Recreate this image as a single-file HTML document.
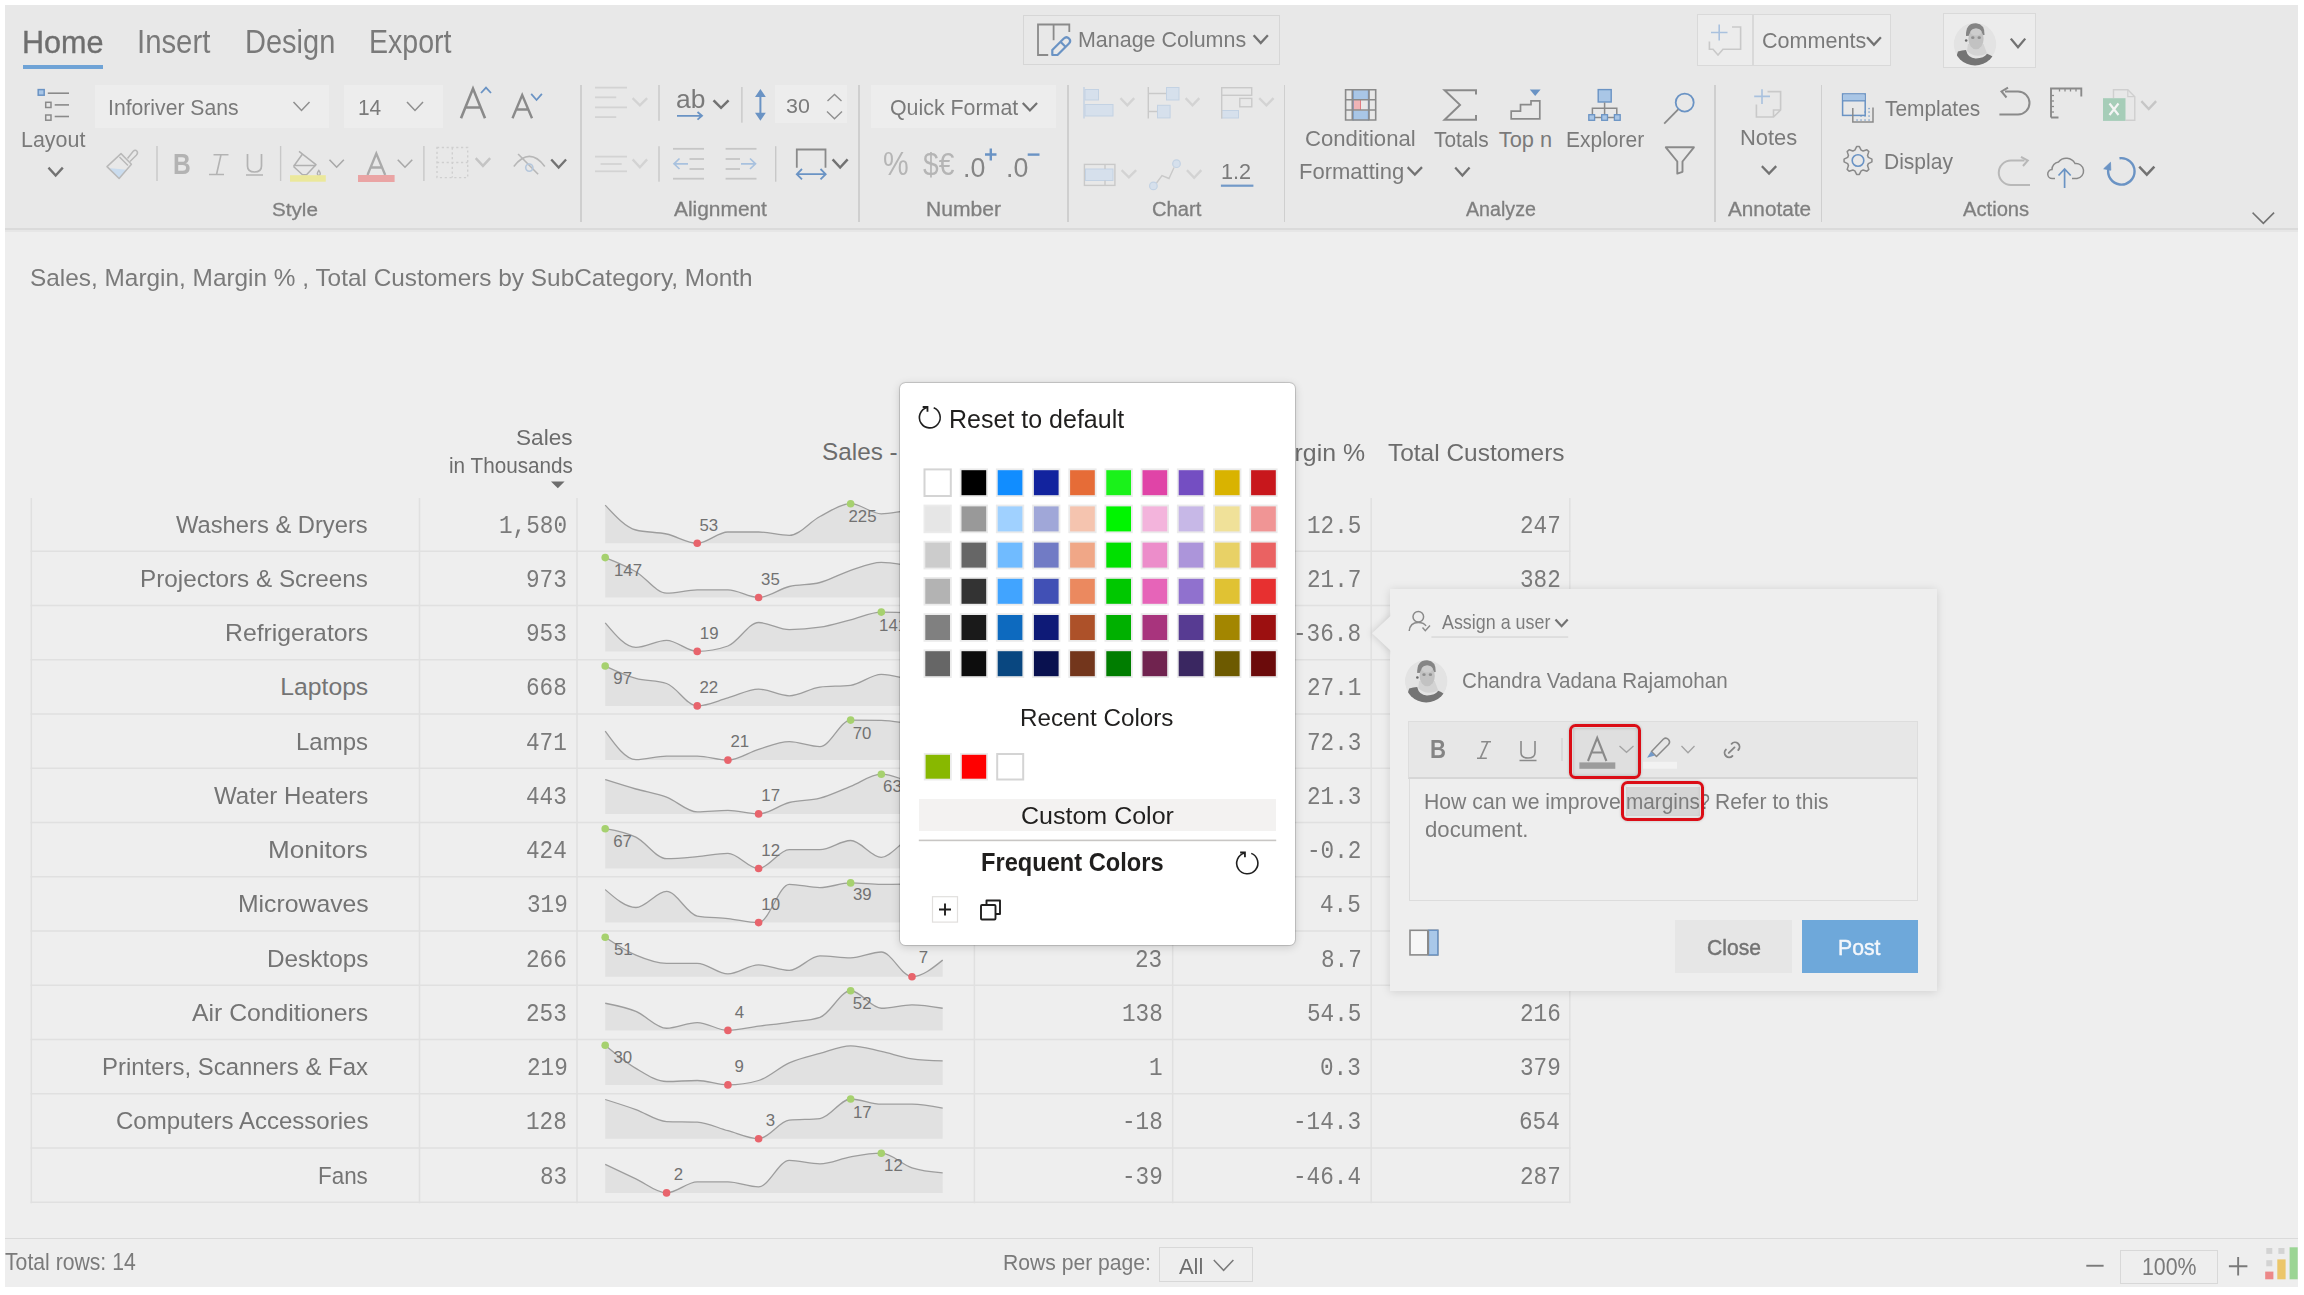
<!DOCTYPE html>
<html><head><meta charset="utf-8">
<style>
html,body{margin:0;padding:0;width:2304px;height:1295px;overflow:hidden;background:#fff;}
body{position:relative;font-family:"Liberation Sans", sans-serif;}
.t{position:absolute;white-space:nowrap;transform-origin:0 0;}
.r{position:absolute;}
svg{position:absolute;overflow:visible;}
</style></head><body>
<div class="r" style="left:5.00px;top:5.00px;width:2293.00px;height:1282.00px;background:#eeeeee;"></div>
<div class="r" style="left:5.00px;top:5.00px;width:2293.00px;height:223.00px;background:#e8e8e8;"></div>
<div class="r" style="left:5.00px;top:228.00px;width:2293.00px;height:2.00px;background:#dadada;"></div>
<div class="r" style="left:5.00px;top:230.00px;width:2293.00px;height:2.00px;background:#e6e6e6;"></div>
<div class="t" style="left:22.26px;top:26.31px;font-size:32.00px;line-height:32.00px;color:#6e6e6e;transform:scaleX(0.9547);-webkit-text-stroke:0.35px #6e6e6e;">Home</div>
<div class="t" style="left:136.86px;top:25.47px;font-size:32.99px;line-height:32.99px;color:#7a7a7a;transform:scaleX(0.8885);">Insert</div>
<div class="t" style="left:245.18px;top:25.47px;font-size:32.99px;line-height:32.99px;color:#7a7a7a;transform:scaleX(0.8791);">Design</div>
<div class="t" style="left:369.21px;top:25.47px;font-size:32.99px;line-height:32.99px;color:#7a7a7a;transform:scaleX(0.8660);">Export</div>
<div class="r" style="left:23.20px;top:64.60px;width:79.70px;height:4.70px;background:#6fa3d6;"></div>
<div class="r" style="left:1023.00px;top:15.00px;width:256.80px;height:49.50px;border:1.5px solid #d6d6d6;box-sizing:border-box;"></div>
<div class="t" style="left:1078.28px;top:28.88px;font-size:22.00px;line-height:22.00px;color:#7a7a7a;transform:scaleX(0.9750);">Manage Columns</div>
<div class="r" style="left:1697.00px;top:14.00px;width:194.25px;height:52.40px;background:#ececec;border:1.5px solid #d9d9d9;box-sizing:border-box;"></div>
<div class="r" style="left:1752.00px;top:15.00px;width:1.50px;height:50.00px;background:#d9d9d9;"></div>
<div class="t" style="left:1762.32px;top:29.78px;font-size:22.00px;line-height:22.00px;color:#7a7a7a;transform:scaleX(0.9799);">Comments</div>
<div class="r" style="left:1943.40px;top:12.50px;width:92.20px;height:55.90px;background:#ececec;border:1.5px solid #d9d9d9;box-sizing:border-box;"></div>
<div class="r" style="left:95.00px;top:85.00px;width:234.20px;height:43.00px;background:#ededed;"></div>
<div class="t" style="left:108.09px;top:95.68px;font-size:22.82px;line-height:22.82px;color:#7a7a7a;transform:scaleX(0.9279);">Inforiver Sans</div>
<div class="r" style="left:344.00px;top:85.00px;width:98.80px;height:43.00px;background:#ededed;"></div>
<div class="t" style="left:358.43px;top:95.68px;font-size:22.82px;line-height:22.82px;color:#7a7a7a;transform:scaleX(0.9157);">14</div>
<div class="r" style="left:775.00px;top:85.00px;width:71.70px;height:38.40px;background:#ededed;"></div>
<div class="t" style="left:785.94px;top:96.01px;font-size:20.78px;line-height:20.78px;color:#7a7a7a;transform:scaleX(1.0320);">30</div>
<div class="r" style="left:870.80px;top:85.00px;width:185.60px;height:43.00px;background:#ededed;"></div>
<div class="t" style="left:890.44px;top:95.68px;font-size:22.82px;line-height:22.82px;color:#7a7a7a;transform:scaleX(0.9368);">Quick Format</div>
<div class="t" style="left:21.08px;top:128.68px;font-size:22.24px;line-height:22.24px;color:#7a7a7a;transform:scaleX(0.9641);">Layout</div>
<div class="t" style="left:1305.29px;top:128.28px;font-size:22.24px;line-height:22.24px;color:#7a7a7a;transform:scaleX(0.9951);">Conditional</div>
<div class="t" style="left:1298.84px;top:160.78px;font-size:22.24px;line-height:22.24px;color:#7a7a7a;transform:scaleX(0.9896);">Formatting</div>
<div class="t" style="left:1433.68px;top:128.64px;font-size:21.80px;line-height:21.80px;color:#7a7a7a;transform:scaleX(0.9586);">Totals</div>
<div class="t" style="left:1498.76px;top:128.64px;font-size:21.80px;line-height:21.80px;color:#7a7a7a;">Top n</div>
<div class="t" style="left:1565.92px;top:128.64px;font-size:21.80px;line-height:21.80px;color:#7a7a7a;transform:scaleX(0.9629);">Explorer</div>
<div class="t" style="left:1739.95px;top:127.04px;font-size:21.80px;line-height:21.80px;color:#7a7a7a;transform:scaleX(1.0056);">Notes</div>
<div class="t" style="left:1885.08px;top:98.02px;font-size:21.95px;line-height:21.95px;color:#7a7a7a;transform:scaleX(0.9527);">Templates</div>
<div class="t" style="left:1884.32px;top:150.54px;font-size:21.80px;line-height:21.80px;color:#7a7a7a;transform:scaleX(0.9646);">Display</div>
<div class="t" style="left:1221.38px;top:160.94px;font-size:21.80px;line-height:21.80px;color:#7a7a7a;transform:scaleX(0.9935);">1.2</div>
<div class="t" style="left:272.47px;top:200.51px;font-size:18.90px;line-height:18.90px;color:#7f7f7f;transform:scaleX(1.0932);-webkit-text-stroke:0.3px #7f7f7f;">Style</div>
<div class="t" style="left:673.80px;top:199.74px;font-size:19.33px;line-height:19.33px;color:#7f7f7f;transform:scaleX(1.0812);-webkit-text-stroke:0.3px #7f7f7f;">Alignment</div>
<div class="t" style="left:926.21px;top:199.74px;font-size:19.33px;line-height:19.33px;color:#7f7f7f;transform:scaleX(1.0899);-webkit-text-stroke:0.3px #7f7f7f;">Number</div>
<div class="t" style="left:1152.19px;top:199.74px;font-size:19.33px;line-height:19.33px;color:#7f7f7f;transform:scaleX(1.0432);-webkit-text-stroke:0.3px #7f7f7f;">Chart</div>
<div class="t" style="left:1466.00px;top:199.74px;font-size:19.33px;line-height:19.33px;color:#7f7f7f;transform:scaleX(1.0169);-webkit-text-stroke:0.3px #7f7f7f;">Analyze</div>
<div class="t" style="left:1728.00px;top:199.74px;font-size:19.33px;line-height:19.33px;color:#7f7f7f;transform:scaleX(1.0725);-webkit-text-stroke:0.3px #7f7f7f;">Annotate</div>
<div class="t" style="left:1963.00px;top:199.74px;font-size:19.33px;line-height:19.33px;color:#7f7f7f;transform:scaleX(1.0442);-webkit-text-stroke:0.3px #7f7f7f;">Actions</div>
<div class="r" style="left:580.05px;top:85.00px;width:1.50px;height:137.00px;background:#cfcfcf;"></div>
<div class="r" style="left:858.05px;top:85.00px;width:1.50px;height:137.00px;background:#cfcfcf;"></div>
<div class="r" style="left:1067.35px;top:85.00px;width:1.50px;height:137.00px;background:#cfcfcf;"></div>
<div class="r" style="left:1283.95px;top:85.00px;width:1.50px;height:137.00px;background:#cfcfcf;"></div>
<div class="r" style="left:1714.25px;top:85.00px;width:1.50px;height:137.00px;background:#cfcfcf;"></div>
<div class="r" style="left:1820.95px;top:85.00px;width:1.50px;height:137.00px;background:#cfcfcf;"></div>
<div class="t" style="left:30.40px;top:266.08px;font-size:24.71px;line-height:24.71px;color:#7a7a7a;transform:scaleX(0.9868);">Sales, Margin, Margin % , Total Customers by SubCategory, Month</div>
<svg width="2304" height="1295" style="left:0;top:0"><rect x="38.2" y="89.6" width="6" height="5.6" fill="#a9c6e6" stroke="#6a93c4" stroke-width="1.5"/>
<line x1="47.8" y1="93.2" x2="69" y2="93.2" stroke="#8a8a8a" stroke-width="1.6"/>
<rect x="45.7" y="102.3" width="5.3" height="5.2" fill="none" stroke="#8a8a8a" stroke-width="1.5"/>
<rect x="45.7" y="115" width="5.3" height="5.2" fill="none" stroke="#8a8a8a" stroke-width="1.5"/>
<line x1="54.7" y1="104.9" x2="69" y2="104.9" stroke="#8a8a8a" stroke-width="1.6"/>
<line x1="54.7" y1="116.5" x2="69" y2="116.5" stroke="#8a8a8a" stroke-width="1.6"/>
<polyline points="49.3,168.5 55.65,175.5 62,168.5" fill="none" stroke="#727272" stroke-width="2.4" stroke-linecap="square"/>
<polyline points="294,102.5 301.5,110.5 309,102.5" fill="none" stroke="#8f8f8f" stroke-width="1.5" stroke-linecap="square"/>
<polyline points="407.5,102.5 415.0,110.5 422.5,102.5" fill="none" stroke="#8f8f8f" stroke-width="1.5" stroke-linecap="square"/>
<path d="M461,118.2 L473,88.6 L485,118.2 M465.5,107.5 H480.5" fill="none" stroke="#8a8a8a" stroke-width="2.6"/>
<polyline points="481,93 486.0,87.6 491,93" fill="none" stroke="#6a93c4" stroke-width="1.8"/>
<path d="M512.5,118.2 L522.2,95 L532,118.2 M516.3,109.5 H528.3" fill="none" stroke="#8a8a8a" stroke-width="2.4"/>
<polyline points="531.8,94.6 536.55,100 541.3,94.6" fill="none" stroke="#6a93c4" stroke-width="1.8" stroke-linecap="square"/>
<path d="M108.4,168 L126.8,169.8 L119.1,178 Z" fill="#cadcee"/>
<path d="M107,166.6 L121,153.6 L131.4,164.2 L119.1,178.5 Z M119.5,157 L128,165.5" fill="none" stroke="#b9b9b9" stroke-width="1.5" stroke-linejoin="round"/>
<path d="M127.5,158.5 L133.2,151.3 Q135.3,149.3 137,151.2 Q138.3,153.2 136.3,155.3 L130,161.5" fill="none" stroke="#b9b9b9" stroke-width="1.5"/>
<rect x="156.3" y="146" width="1.4" height="35" fill="#c8c8c8"/>
<rect x="279.90000000000003" y="146" width="1.4" height="35" fill="#c8c8c8"/>
<rect x="423.2" y="146" width="1.4" height="35" fill="#c8c8c8"/>
<rect x="658.3" y="85" width="1.4" height="35.8" fill="#c8c8c8"/>
<rect x="658.3" y="146.2" width="1.4" height="35.5" fill="#c8c8c8"/>
<rect x="741.1999999999999" y="87" width="1.4" height="35.7" fill="#c8c8c8"/>
<rect x="775.0" y="146.2" width="1.4" height="35.5" fill="#c8c8c8"/>
<path d="M213.5,154.8 H228.5 M209,174.5 H224 M221,154.8 L216.5,174.5" fill="none" stroke="#b3b3b3" stroke-width="1.6"/>
<path d="M247.5,154 V166 Q247.5,172 254.5,172 Q261.5,172 261.5,166 V154 M246,175 H263" fill="none" stroke="#b3b3b3" stroke-width="1.7"/>
<path d="M293.5,166.5 L302.3,154.2 M299,151.4 L316,164.7 L306.5,174.7 H302.5 L293.5,166.5 M293.5,165.6 H316" fill="none" stroke="#b0b0b0" stroke-width="1.5" stroke-linejoin="round"/>
<path d="M318.8,170.5 Q321.8,174.5 318.8,175.5 Q315.8,174.5 318.8,170.5 Z" fill="none" stroke="#b0b0b0" stroke-width="1.4"/>
<rect x="290" y="175.2" width="35.8" height="6.5" fill="#ebe89b"/>
<polyline points="330,160.3 336.65,167.2 343.3,160.3" fill="none" stroke="#a8a8a8" stroke-width="1.6" stroke-linecap="square"/>
<path d="M367.5,175 L376.3,153.5 L385.2,175 M370.8,167.5 H381.8" fill="none" stroke="#aaaaaa" stroke-width="2.3"/>
<rect x="358" y="175" width="36.6" height="7" fill="#eaa4a4"/>
<polyline points="398.3,160.3 405.0,167.2 411.7,160.3" fill="none" stroke="#a8a8a8" stroke-width="1.6" stroke-linecap="square"/>
<path d="M437,147.5 H467.7 V177.6 H437 Z M452.3,147.5 V177.6 M437,162.5 H467.7" fill="none" stroke="#cfcfcf" stroke-width="1.4" stroke-dasharray="2.2,2.6"/>
<polyline points="476.6,159 482.95000000000005,165.8 489.3,159" fill="none" stroke="#c4c4c4" stroke-width="2.5" stroke-linecap="square"/>
<path d="M513.8,166.4 Q529.6,146.4 544.8,166.4" fill="none" stroke="#b7b7b7" stroke-width="1.6"/>
<path d="M518.1,154 L538.1,174.3" fill="none" stroke="#b7b7b7" stroke-width="1.6"/>
<circle cx="529.3" cy="167.6" r="3.6" fill="none" stroke="#b5c7dc" stroke-width="1.6"/>
<polyline points="552,160.3 558.65,167.5 565.3,160.3" fill="none" stroke="#727272" stroke-width="2.3" stroke-linecap="square"/>
<line x1="595" y1="87.6" x2="627" y2="87.6" stroke="#d3d3d3" stroke-width="1.8"/>
<line x1="595" y1="97.3" x2="616.2" y2="97.3" stroke="#d3d3d3" stroke-width="1.8"/>
<line x1="595" y1="107.4" x2="627" y2="107.4" stroke="#d3d3d3" stroke-width="1.8"/>
<line x1="595" y1="117.1" x2="616.2" y2="117.1" stroke="#d3d3d3" stroke-width="1.8"/>
<polyline points="633.5,99 639.9,105.3 646.3,99" fill="none" stroke="#d3d3d3" stroke-width="2.4" stroke-linecap="square"/>
<path d="M677,115.8 H702 M697.5,112 L702,115.8 L697.5,119.6" fill="none" stroke="#6a93c4" stroke-width="1.8"/>
<polyline points="714.4,101.2 721.05,107.8 727.7,101.2" fill="none" stroke="#727272" stroke-width="2.5" stroke-linecap="square"/>
<path d="M760.4,92 V117.5" stroke="#6a93c4" stroke-width="2"/>
<path d="M755,97 L760.4,88.9 L765.8,97 Z M755,112.7 L760.4,120.8 L765.8,112.7 Z" fill="#6a93c4"/>
<polyline points="827.5,101 834.5,94.5 841.5,101" fill="none" stroke="#8f8f8f" stroke-width="1.4"/>
<polyline points="827.5,112 834.5,118.8 841.5,112" fill="none" stroke="#8f8f8f" stroke-width="1.4" stroke-linecap="square"/>
<line x1="595" y1="156.6" x2="627" y2="156.6" stroke="#d3d3d3" stroke-width="1.8"/>
<line x1="600.6" y1="164" x2="621.7" y2="164" stroke="#d3d3d3" stroke-width="1.8"/>
<line x1="595" y1="171.3" x2="627" y2="171.3" stroke="#d3d3d3" stroke-width="1.8"/>
<polyline points="633.5,160.3 639.9,167.2 646.3,160.3" fill="none" stroke="#d3d3d3" stroke-width="2.4" stroke-linecap="square"/>
<line x1="673" y1="148.8" x2="704" y2="148.8" stroke="#c6c6c6" stroke-width="1.8"/>
<line x1="673" y1="178.7" x2="704" y2="178.7" stroke="#c6c6c6" stroke-width="1.8"/>
<line x1="689.5" y1="159" x2="704" y2="159" stroke="#c6c6c6" stroke-width="1.8"/>
<line x1="689.5" y1="169" x2="704" y2="169" stroke="#c6c6c6" stroke-width="1.8"/>
<path d="M688,163.8 H674 M679.5,158.5 L674,163.8 L679.5,169" fill="none" stroke="#a8c1de" stroke-width="1.7"/>
<line x1="725.6" y1="148.8" x2="756.5" y2="148.8" stroke="#c6c6c6" stroke-width="1.8"/>
<line x1="725.6" y1="178.7" x2="756.5" y2="178.7" stroke="#c6c6c6" stroke-width="1.8"/>
<line x1="725.6" y1="159" x2="740" y2="159" stroke="#c6c6c6" stroke-width="1.8"/>
<line x1="725.6" y1="169" x2="740" y2="169" stroke="#c6c6c6" stroke-width="1.8"/>
<path d="M741,163.8 H755.5 M750,158.5 L755.5,163.8 L750,169" fill="none" stroke="#a8c1de" stroke-width="1.7"/>
<path d="M796.8,167.7 V149.5 H825.5 V167.7" fill="none" stroke="#8a8a8a" stroke-width="1.8"/>
<path d="M797,174.2 H825.5 M802,169 L796.8,174.2 L802,179.4 M820.5,169 L825.7,174.2 L820.5,179.4" fill="none" stroke="#6a93c4" stroke-width="1.8"/>
<polyline points="833.5,160.3 840.15,167.5 846.8,160.3" fill="none" stroke="#727272" stroke-width="2.5" stroke-linecap="square"/>
<polyline points="1023.5,103.7 1029.9,110.5 1036.3,103.7" fill="none" stroke="#727272" stroke-width="2.2" stroke-linecap="square"/>
<path d="M985,154.5 H996.5 M990.8,148.5 V160.5" stroke="#6a93c4" stroke-width="2.4"/>
<path d="M1027.7,154.6 H1039.5" stroke="#6a93c4" stroke-width="2.4"/>
<path d="M1084,87 V118.5" stroke="#c3d2e3" stroke-width="1.4"/>
<rect x="1085" y="89.5" width="13.5" height="10.5" fill="#d6e0ec" stroke="#c3d2e3" stroke-width="1"/>
<rect x="1085" y="104.5" width="28" height="11.5" fill="#d6e0ec" stroke="#c3d2e3" stroke-width="1"/>
<polyline points="1121.3,99 1127.35,105.3 1133.4,99" fill="none" stroke="#d3d3d3" stroke-width="2.4" stroke-linecap="square"/>
<path d="M1148.3,87 V118.4 M1148.3,93.5 H1166 M1148.3,111.5 H1157" stroke="#c9c9c9" stroke-width="1.4" fill="none"/>
<rect x="1166.5" y="87.5" width="12.5" height="12.5" fill="#d6e0ec" stroke="#c3d2e3" stroke-width="1"/>
<rect x="1157.5" y="105.3" width="12.6" height="12.6" fill="#d6e0ec" stroke="#c3d2e3" stroke-width="1"/>
<polyline points="1186.5,99 1192.5,105.3 1198.5,99" fill="none" stroke="#d3d3d3" stroke-width="2.4" stroke-linecap="square"/>
<rect x="1221.7" y="87.7" width="30" height="7.6" fill="none" stroke="#c9c9c9" stroke-width="1.4"/>
<rect x="1239.8" y="98.4" width="12" height="8.4" fill="none" stroke="#c9c9c9" stroke-width="1.4"/>
<rect x="1221.5" y="110.5" width="17" height="7.5" fill="#d6e0ec" stroke="#c3d2e3" stroke-width="1"/>
<path d="M1221.7,95.3 V118.4" stroke="#c9c9c9" stroke-width="1.4"/>
<polyline points="1260.1,99 1266.4,105.3 1272.7,99" fill="none" stroke="#d3d3d3" stroke-width="2.4" stroke-linecap="square"/>
<rect x="1084.4" y="164.4" width="30.5" height="21" fill="none" stroke="#c9c9c9" stroke-width="1.4"/>
<rect x="1085.5" y="169" width="27.5" height="11.5" fill="#d6e0ec" stroke="#c3d2e3" stroke-width="1"/>
<path d="M1105,164.4 V169 M1105,180.5 V185.4" stroke="#c9c9c9" stroke-width="1.4"/>
<polyline points="1122.5,171 1128.9,177.4 1135.3,171" fill="none" stroke="#d3d3d3" stroke-width="2.4" stroke-linecap="square"/>
<path d="M1156.5,183 L1162,175.5 L1169,178.5 L1174,167.5" fill="none" stroke="#c9c9c9" stroke-width="1.4"/>
<circle cx="1153.4" cy="185.9" r="3.8" fill="#d6e0ec" stroke="#c3d2e3" stroke-width="1.2"/>
<circle cx="1176.5" cy="163.7" r="3.8" fill="#d6e0ec" stroke="#c3d2e3" stroke-width="1.2"/>
<polyline points="1187.8,171 1194.15,177.8 1200.5,171" fill="none" stroke="#d3d3d3" stroke-width="2.4" stroke-linecap="square"/>
<rect x="1220.9" y="184.6" width="32.5" height="2.2" fill="#7299c8"/>
<rect x="1353" y="89.5" width="15.5" height="10" fill="#a9c6e6"/>
<rect x="1353" y="110.5" width="15.5" height="10" fill="#a9c6e6"/>
<rect x="1353" y="100" width="7.5" height="10" fill="#f0b4b6"/>
<path d="M1353,100 V110 M1360.5,100 V110" stroke="#e27b80" stroke-width="1"/>
<path d="M1353,89.5 V120.5 M1368.5,89.5 V120.5" stroke="#6a93c4" stroke-width="1.3"/>
<path d="M1345.6,89.7 H1375.7 V120 H1345.6 Z M1345.6,99.8 H1375.7 M1345.6,110 H1375.7 M1352.3,89.7 V120 M1369,89.7 V120" fill="none" stroke="#8a8a8a" stroke-width="1.6"/>
<polyline points="1408.5,168 1414.85,174.5 1421.2,168" fill="none" stroke="#727272" stroke-width="2.3" stroke-linecap="square"/>
<path d="M1476,94.5 V90.2 H1444.6 L1460,104.9 L1444.6,119.7 H1476 V115" fill="none" stroke="#8a8a8a" stroke-width="2"/>
<polyline points="1456,168.4 1462.4,175.6 1468.8,168.4" fill="none" stroke="#727272" stroke-width="2.3" stroke-linecap="square"/>
<path d="M1511.2,118.8 V111.2 H1520.5 V104.6 H1531 V100.9 H1539.8 V118.8 Z" fill="none" stroke="#8a8a8a" stroke-width="1.7"/>
<path d="M1529.8,89.5 H1540.6 L1535.2,96 Z" fill="#6a93c4"/>
<rect x="1598.2" y="89.6" width="13" height="12.4" fill="#a9c6e6" stroke="#6a93c4" stroke-width="1.4"/>
<path d="M1604.6,102.6 V114.5 M1592.4,114.5 V108.2 H1616.8 V114.5 M1595,117.4 H1614" fill="none" stroke="#8a8a8a" stroke-width="1.5"/>
<rect x="1588.8" y="114.7" width="5.8" height="5.6" fill="#a9c6e6" stroke="#6a93c4" stroke-width="1.3"/>
<rect x="1601.6999999999998" y="114.7" width="5.8" height="5.6" fill="#a9c6e6" stroke="#6a93c4" stroke-width="1.3"/>
<rect x="1614.3999999999999" y="114.7" width="5.8" height="5.6" fill="#a9c6e6" stroke="#6a93c4" stroke-width="1.3"/>
<circle cx="1684.7" cy="102.6" r="9" fill="none" stroke="#6a93c4" stroke-width="1.8"/>
<line x1="1678.2" y1="109.3" x2="1664.2" y2="123.6" stroke="#8a8a8a" stroke-width="1.8"/>
<path d="M1665.8,147.3 H1693.9 L1682.5,161.5 V171.8 L1677.3,173.6 V161.5 Z" fill="none" stroke="#8a8a8a" stroke-width="1.9" stroke-linejoin="round"/>
<path d="M1754.2,96.4 H1770 M1762,89.3 V104" stroke="#a9c1de" stroke-width="1.6"/>
<path d="M1767.5,91.6 H1780.6 V110 L1773.5,117 H1756.4 V104.5 M1773.5,117 V110 H1780.6" fill="none" stroke="#c9c9c9" stroke-width="1.6"/>
<polyline points="1762.7,167 1769.0500000000002,173.6 1775.4,167" fill="none" stroke="#727272" stroke-width="2.3" stroke-linecap="square"/>
<rect x="1842.6" y="93.9" width="22.6" height="21.5" fill="none" stroke="#6a93c4" stroke-width="1.5"/>
<rect x="1843.3" y="94.6" width="21.2" height="5.5" fill="#a9c6e6"/>
<line x1="1842.6" y1="100.8" x2="1865.2" y2="100.8" stroke="#6a93c4" stroke-width="1.4"/>
<path d="M1852.8,108 V122 H1873 V107.5" fill="none" stroke="#8a8a8a" stroke-width="1.5"/>
<rect x="1856.4" y="119.4" width="1.3" height="1.3" fill="#6a93c4"/>
<rect x="1860.4" y="119.4" width="1.3" height="1.3" fill="#6a93c4"/>
<rect x="1864.4" y="119.4" width="1.3" height="1.3" fill="#6a93c4"/>
<rect x="1868.4" y="119.4" width="1.3" height="1.3" fill="#6a93c4"/>
<rect x="1860.4" y="115.4" width="1.3" height="1.3" fill="#6a93c4"/>
<rect x="1864.4" y="115.4" width="1.3" height="1.3" fill="#6a93c4"/>
<rect x="1868.4" y="115.4" width="1.3" height="1.3" fill="#6a93c4"/>
<rect x="1864.4" y="111.4" width="1.3" height="1.3" fill="#6a93c4"/>
<rect x="1868.4" y="111.4" width="1.3" height="1.3" fill="#6a93c4"/>
<rect x="1868.4" y="107.9" width="1.3" height="1.3" fill="#6a93c4"/>
<polygon points="1854.86,150.17 1856.63,146.57 1859.37,146.57 1861.14,150.17 1863.09,150.98 1866.88,149.68 1868.82,151.62 1867.52,155.41 1868.33,157.36 1871.93,159.13 1871.93,161.87 1868.33,163.64 1867.52,165.59 1868.82,169.38 1866.88,171.32 1863.09,170.02 1861.14,170.83 1859.37,174.43 1856.63,174.43 1854.86,170.83 1852.91,170.02 1849.12,171.32 1847.18,169.38 1848.48,165.59 1847.67,163.64 1844.07,161.87 1844.07,159.13 1847.67,157.36 1848.48,155.41 1847.18,151.62 1849.12,149.68 1852.91,150.98" fill="none" stroke="#8a8a8a" stroke-width="1.5" stroke-linejoin="round"/>
<circle cx="1858" cy="160.5" r="5.8" fill="none" stroke="#6a93c4" stroke-width="1.6"/>
<path d="M2005,91.5 H2018 A11.5,11.5 0 0 1 2018,114.5 H1999.4" fill="none" stroke="#8a8a8a" stroke-width="2"/>
<path d="M2008,87.6 L2001.5,91.5 L2006.5,97.5" fill="none" stroke="#8a8a8a" stroke-width="2"/>
<path d="M2051,117.5 V88.5 H2081.3 V96.5 M2051,117.5 H2058.5" fill="none" stroke="#8a8a8a" stroke-width="1.9"/>
<line x1="2059.5" y1="88.5" x2="2059.5" y2="91.5" stroke="#8a8a8a" stroke-width="1.3"/>
<line x1="2065" y1="88.5" x2="2065" y2="91.5" stroke="#8a8a8a" stroke-width="1.3"/>
<line x1="2070.5" y1="88.5" x2="2070.5" y2="91.5" stroke="#8a8a8a" stroke-width="1.3"/>
<line x1="2076" y1="88.5" x2="2076" y2="91.5" stroke="#8a8a8a" stroke-width="1.3"/>
<line x1="2051" y1="95.5" x2="2054" y2="95.5" stroke="#8a8a8a" stroke-width="1.3"/>
<line x1="2051" y1="101" x2="2054" y2="101" stroke="#8a8a8a" stroke-width="1.3"/>
<line x1="2051" y1="106.5" x2="2054" y2="106.5" stroke="#8a8a8a" stroke-width="1.3"/>
<line x1="2051" y1="112" x2="2054" y2="112" stroke="#8a8a8a" stroke-width="1.3"/>
<path d="M2113.5,98 V89.7 H2127.8 L2134.8,96.7 V120.3 H2125.5" fill="none" stroke="#cfcfcf" stroke-width="1.4"/>
<path d="M2127.8,89.7 V96.7 H2134.8" fill="none" stroke="#cfcfcf" stroke-width="1.2"/>
<rect x="2103" y="98.2" width="22.5" height="22.7" fill="#a6cdb8"/>
<path d="M2109.5,103.5 L2118.5,115 M2118.5,103.5 L2109.5,115" stroke="#f4f4f4" stroke-width="2.2"/>
<polyline points="2142.2,102 2148.75,109 2155.3,102" fill="none" stroke="#c6c6c6" stroke-width="2.4" stroke-linecap="square"/>
<path d="M2024.5,160.5 H2011 A12,12 0 0 0 2011,185 H2030" fill="none" stroke="#b8b8b8" stroke-width="2"/>
<path d="M2021,156.8 L2027.8,160.5 L2023,166" fill="none" stroke="#b8b8b8" stroke-width="2"/>
<path d="M2055,178.5 H2052.5 A4.5,4.5 0 0 1 2052,169.5 A7.5,7.5 0 0 1 2058.5,162 A10,10 0 0 1 2075,163.5 A7,7 0 0 1 2077,178.5 H2072" fill="none" stroke="#8a8a8a" stroke-width="1.5"/>
<path d="M2064.6,188 V169 M2058.5,175.5 L2064.6,169 L2070.7,175.5" fill="none" stroke="#6a93c4" stroke-width="1.7"/>
<path d="M2108.6,168 A13.2,13.2 0 1 0 2119.5,158.3" fill="none" stroke="#6a93c4" stroke-width="2.4"/>
<path d="M2103.7,168.8 L2110.5,162.3 L2110.8,170.2 Z" fill="#6a93c4" stroke="#6a93c4" stroke-width="0.8" stroke-linejoin="round"/>
<polyline points="2140.1,167.6 2146.8,174.6 2153.5,167.6" fill="none" stroke="#727272" stroke-width="2.5" stroke-linecap="square"/>
<polyline points="2253.2,213.2 2263.35,223.3 2273.5,213.2" fill="none" stroke="#727272" stroke-width="1.6" stroke-linecap="square"/>
<path d="M1048.2,55 H1038 V24.5 H1069.3 V32 M1053.6,24.5 V40.2" fill="none" stroke="#8a8a8a" stroke-width="1.8"/>
<path d="M1052.3,55 L1052.3,50 L1063.8,38.5 Q1066.5,36 1069,38.5 Q1071.5,41 1069,43.5 L1057.5,55 Z M1060.5,41.8 L1065.7,47" fill="none" stroke="#6a93c4" stroke-width="2.2" stroke-linejoin="round"/>
<polyline points="1254.4,36 1260.75,43 1267.1,36" fill="none" stroke="#727272" stroke-width="2.3" stroke-linecap="square"/>
<path d="M1711,32.5 H1727.5 M1719.2,24.5 V40.5" stroke="#a9c1de" stroke-width="1.6"/>
<path d="M1732,27 H1740.6 V49.2 H1723 L1718,55 L1713,49.2 H1709.4 V41.5" fill="none" stroke="#c9c9c9" stroke-width="1.6"/>
<polyline points="1867.8,38 1873.9499999999998,44.8 1880.1,38" fill="none" stroke="#727272" stroke-width="2.3" stroke-linecap="square"/>
<polyline points="2011.5,39.5 2018.0,47.2 2024.5,39.5" fill="none" stroke="#727272" stroke-width="2.3" stroke-linecap="square"/><defs><clipPath id="ava"><circle cx="1975" cy="44.05" r="21.35"/></clipPath></defs>
<g clip-path="url(#ava)">
<circle cx="1975" cy="44.05" r="21.35" fill="#e3e3e3"/>
<path d="M1965.98,36.03 Q1965.48,23.00 1976.00,23.20 Q1985.02,24.00 1984.52,35.03 Z" fill="#858585"/>
<path d="M1967.98,44.05 L1966.98,51.07 Q1975.00,59.09 1987.03,53.57 L1983.52,44.05 Z" fill="#d3d3d3"/>
<ellipse cx="1976.00" cy="38.84" rx="7.62" ry="10.42" fill="#c2c2c2"/>
<ellipse cx="1976.00" cy="32.02" rx="5.51" ry="3.51" fill="#cdcdcd"/>
<ellipse cx="1972.79" cy="37.63" rx="1.70" ry="1.40" fill="#8f8f8f"/>
<ellipse cx="1979.21" cy="37.63" rx="1.70" ry="1.40" fill="#8f8f8f"/>
<circle cx="1966.18" cy="40.44" r="1.30" fill="#6a6a6a"/>
<path d="M1950.94,74.12 L1957.96,51.57 Q1961.97,50.06 1965.98,50.06 Q1967.98,58.58 1976.00,58.38 Q1984.02,58.08 1987.03,53.67 Q1990.04,54.57 1992.54,56.58 L1999.06,74.12 Z" fill="#747474"/>
</g></svg>
<div class="t" style="left:173.40px;top:149.21px;font-size:30.23px;line-height:30.23px;color:#b3b3b3;font-weight:700;transform:scaleX(0.8134);">B</div>
<div class="t" style="left:675.74px;top:87.47px;font-size:25.44px;line-height:25.44px;color:#7a7a7a;transform:scaleX(1.0382);">ab</div>
<div class="t" style="left:882.59px;top:147.45px;font-size:33.14px;line-height:33.14px;color:#b5b5b5;transform:scaleX(0.8721);">%</div>
<div class="t" style="left:923.32px;top:148.43px;font-size:31.98px;line-height:31.98px;color:#b5b5b5;transform:scaleX(0.8820);">$€</div>
<div class="t" style="left:963.49px;top:153.41px;font-size:28.34px;line-height:28.34px;color:#858585;transform:scaleX(0.9442);">.0</div>
<div class="t" style="left:1006.49px;top:153.41px;font-size:28.34px;line-height:28.34px;color:#858585;transform:scaleX(0.9442);">.0</div>
<div class="t" style="left:516.18px;top:425.88px;font-size:22.82px;line-height:22.82px;color:#6c6c6c;transform:scaleX(0.9905);">Sales</div>
<div class="t" style="left:448.65px;top:455.59px;font-size:21.51px;line-height:21.51px;color:#6c6c6c;transform:scaleX(0.9629);">in Thousands</div>
<div class="t" style="left:822.11px;top:440.25px;font-size:24.27px;line-height:24.27px;color:#6c6c6c;">Sales - Month</div>
<div class="t" style="left:1259.91px;top:440.52px;font-size:23.84px;line-height:23.84px;color:#6c6c6c;transform:scaleX(1.0432);">Margin %</div>
<div class="t" style="left:1388.21px;top:440.52px;font-size:23.84px;line-height:23.84px;color:#6c6c6c;transform:scaleX(1.0257);">Total Customers</div>
<svg width="2304" height="1295" style="left:0;top:0"><path d="M551,481.6 H564.6 L557.8,488.2 Z" fill="#6d6d6d"/><rect x="30.55" y="498.0" width="1.5" height="705.25" fill="#e0e0e0"/><rect x="418.75" y="498.0" width="1.5" height="705.25" fill="#e0e0e0"/><rect x="576.25" y="498.0" width="1.5" height="705.25" fill="#e0e0e0"/><rect x="973.65" y="498.0" width="1.5" height="705.25" fill="#e0e0e0"/><rect x="1171.95" y="498.0" width="1.5" height="705.25" fill="#e0e0e0"/><rect x="1370.45" y="498.0" width="1.5" height="705.25" fill="#e0e0e0"/><rect x="1569.05" y="498.0" width="1.5" height="705.25" fill="#e0e0e0"/><rect x="30.5" y="550.5" width="1540" height="1.5" fill="#e0e0e0"/><rect x="30.5" y="604.75" width="1540" height="1.5" fill="#e0e0e0"/><rect x="30.5" y="659.0" width="1540" height="1.5" fill="#e0e0e0"/><rect x="30.5" y="713.25" width="1540" height="1.5" fill="#e0e0e0"/><rect x="30.5" y="767.5" width="1540" height="1.5" fill="#e0e0e0"/><rect x="30.5" y="821.75" width="1540" height="1.5" fill="#e0e0e0"/><rect x="30.5" y="876.0" width="1540" height="1.5" fill="#e0e0e0"/><rect x="30.5" y="930.25" width="1540" height="1.5" fill="#e0e0e0"/><rect x="30.5" y="984.5" width="1540" height="1.5" fill="#e0e0e0"/><rect x="30.5" y="1038.75" width="1540" height="1.5" fill="#e0e0e0"/><rect x="30.5" y="1093.0" width="1540" height="1.5" fill="#e0e0e0"/><rect x="30.5" y="1147.25" width="1540" height="1.5" fill="#e0e0e0"/><rect x="30.5" y="1201.5" width="1540" height="1.5" fill="#e0e0e0"/><path d="M605.20,505.10 C615.43,516.22 625.65,527.33 635.88,530.00 C646.11,532.67 656.33,531.80 666.56,534.00 C676.79,536.20 687.01,543.20 697.24,543.20 C707.47,543.20 717.69,532.00 727.92,532.00 C738.15,532.00 748.37,532.00 758.60,532.00 C768.83,532.00 779.05,535.40 789.28,535.40 C799.51,535.40 809.73,521.78 819.96,516.50 C830.19,511.22 840.41,503.70 850.64,503.70 C860.87,503.70 871.09,513.80 881.32,513.80 C891.55,513.80 901.77,510.50 912.00,510.50 C922.23,510.50 932.45,511.25 942.68,512.00 L942.68,543.20 L605.20,543.20 Z" fill="#e1e1e1"/><path d="M605.20,505.10 C615.43,516.22 625.65,527.33 635.88,530.00 C646.11,532.67 656.33,531.80 666.56,534.00 C676.79,536.20 687.01,543.20 697.24,543.20 C707.47,543.20 717.69,532.00 727.92,532.00 C738.15,532.00 748.37,532.00 758.60,532.00 C768.83,532.00 779.05,535.40 789.28,535.40 C799.51,535.40 809.73,521.78 819.96,516.50 C830.19,511.22 840.41,503.70 850.64,503.70 C860.87,503.70 871.09,513.80 881.32,513.80 C891.55,513.80 901.77,510.50 912.00,510.50 C922.23,510.50 932.45,511.25 942.68,512.00" fill="none" stroke="#9d9d9d" stroke-width="1.3"/><circle cx="697.24" cy="543.20" r="3.8" fill="#e8646c"/><circle cx="850.64" cy="503.70" r="3.8" fill="#a6d16f"/><path d="M605.20,557.60 C615.43,561.68 625.65,565.77 635.88,571.70 C646.11,577.63 656.33,593.20 666.56,593.20 C676.79,593.20 687.01,589.90 697.24,589.90 C707.47,589.90 717.69,589.90 727.92,589.90 C738.15,589.90 748.37,597.50 758.60,597.50 C768.83,597.50 779.05,589.00 789.28,586.50 C799.51,584.00 809.73,585.17 819.96,582.50 C830.19,579.83 840.41,573.67 850.64,570.30 C860.87,566.93 871.09,562.30 881.32,562.30 C891.55,562.30 901.77,564.72 912.00,566.00 C922.23,567.28 932.45,568.64 942.68,570.00 L942.68,597.50 L605.20,597.50 Z" fill="#e1e1e1"/><path d="M605.20,557.60 C615.43,561.68 625.65,565.77 635.88,571.70 C646.11,577.63 656.33,593.20 666.56,593.20 C676.79,593.20 687.01,589.90 697.24,589.90 C707.47,589.90 717.69,589.90 727.92,589.90 C738.15,589.90 748.37,597.50 758.60,597.50 C768.83,597.50 779.05,589.00 789.28,586.50 C799.51,584.00 809.73,585.17 819.96,582.50 C830.19,579.83 840.41,573.67 850.64,570.30 C860.87,566.93 871.09,562.30 881.32,562.30 C891.55,562.30 901.77,564.72 912.00,566.00 C922.23,567.28 932.45,568.64 942.68,570.00" fill="none" stroke="#9d9d9d" stroke-width="1.3"/><circle cx="758.60" cy="597.50" r="3.8" fill="#e8646c"/><circle cx="605.20" cy="557.60" r="3.8" fill="#a6d16f"/><path d="M605.20,622.90 C615.43,635.15 625.65,647.40 635.88,647.40 C646.11,647.40 656.33,640.40 666.56,640.40 C676.79,640.40 687.01,651.40 697.24,651.40 C707.47,651.40 717.69,649.60 727.92,646.00 C738.15,642.40 748.37,622.50 758.60,622.50 C768.83,622.50 779.05,629.60 789.28,629.60 C799.51,629.60 809.73,628.80 819.96,627.20 C830.19,625.60 840.41,622.32 850.64,619.80 C860.87,617.28 871.09,612.10 881.32,612.10 C891.55,612.10 901.77,612.40 912.00,613.00 C922.23,613.60 932.45,614.80 942.68,616.00 L942.68,651.40 L605.20,651.40 Z" fill="#e1e1e1"/><path d="M605.20,622.90 C615.43,635.15 625.65,647.40 635.88,647.40 C646.11,647.40 656.33,640.40 666.56,640.40 C676.79,640.40 687.01,651.40 697.24,651.40 C707.47,651.40 717.69,649.60 727.92,646.00 C738.15,642.40 748.37,622.50 758.60,622.50 C768.83,622.50 779.05,629.60 789.28,629.60 C799.51,629.60 809.73,628.80 819.96,627.20 C830.19,625.60 840.41,622.32 850.64,619.80 C860.87,617.28 871.09,612.10 881.32,612.10 C891.55,612.10 901.77,612.40 912.00,613.00 C922.23,613.60 932.45,614.80 942.68,616.00" fill="none" stroke="#9d9d9d" stroke-width="1.3"/><circle cx="697.24" cy="651.40" r="3.8" fill="#e8646c"/><circle cx="881.32" cy="612.10" r="3.8" fill="#a6d16f"/><path d="M605.20,666.00 C615.43,670.74 625.65,675.48 635.88,678.40 C646.11,681.32 656.33,680.10 666.56,683.50 C676.79,686.90 687.01,705.90 697.24,705.90 C707.47,705.90 717.69,700.70 727.92,697.90 C738.15,695.10 748.37,689.10 758.60,689.10 C768.83,689.10 779.05,695.80 789.28,695.80 C799.51,695.80 809.73,688.30 819.96,687.10 C830.19,685.90 840.41,686.50 850.64,685.30 C860.87,684.10 871.09,674.30 881.32,674.30 C891.55,674.30 901.77,678.38 912.00,680.00 C922.23,681.62 932.45,682.81 942.68,684.00 L942.68,705.90 L605.20,705.90 Z" fill="#e1e1e1"/><path d="M605.20,666.00 C615.43,670.74 625.65,675.48 635.88,678.40 C646.11,681.32 656.33,680.10 666.56,683.50 C676.79,686.90 687.01,705.90 697.24,705.90 C707.47,705.90 717.69,700.70 727.92,697.90 C738.15,695.10 748.37,689.10 758.60,689.10 C768.83,689.10 779.05,695.80 789.28,695.80 C799.51,695.80 809.73,688.30 819.96,687.10 C830.19,685.90 840.41,686.50 850.64,685.30 C860.87,684.10 871.09,674.30 881.32,674.30 C891.55,674.30 901.77,678.38 912.00,680.00 C922.23,681.62 932.45,682.81 942.68,684.00" fill="none" stroke="#9d9d9d" stroke-width="1.3"/><circle cx="697.24" cy="705.90" r="3.8" fill="#e8646c"/><circle cx="605.20" cy="666.00" r="3.8" fill="#a6d16f"/><path d="M605.20,731.20 C615.43,745.45 625.65,759.70 635.88,759.70 C646.11,759.70 656.33,756.10 666.56,756.10 C676.79,756.10 687.01,756.10 697.24,756.10 C707.47,756.10 717.69,760.10 727.92,760.10 C738.15,760.10 748.37,752.37 758.60,749.30 C768.83,746.23 779.05,741.70 789.28,741.70 C799.51,741.70 809.73,746.70 819.96,746.70 C830.19,746.70 840.41,720.10 850.64,720.10 C860.87,720.10 871.09,720.20 881.32,720.40 C891.55,720.60 901.77,722.90 912.00,724.00 C922.23,725.10 932.45,726.05 942.68,727.00 L942.68,760.10 L605.20,760.10 Z" fill="#e1e1e1"/><path d="M605.20,731.20 C615.43,745.45 625.65,759.70 635.88,759.70 C646.11,759.70 656.33,756.10 666.56,756.10 C676.79,756.10 687.01,756.10 697.24,756.10 C707.47,756.10 717.69,760.10 727.92,760.10 C738.15,760.10 748.37,752.37 758.60,749.30 C768.83,746.23 779.05,741.70 789.28,741.70 C799.51,741.70 809.73,746.70 819.96,746.70 C830.19,746.70 840.41,720.10 850.64,720.10 C860.87,720.10 871.09,720.20 881.32,720.40 C891.55,720.60 901.77,722.90 912.00,724.00 C922.23,725.10 932.45,726.05 942.68,727.00" fill="none" stroke="#9d9d9d" stroke-width="1.3"/><circle cx="727.92" cy="760.10" r="3.8" fill="#e8646c"/><circle cx="850.64" cy="720.10" r="3.8" fill="#a6d16f"/><path d="M605.20,779.60 C615.43,782.84 625.65,786.08 635.88,789.00 C646.11,791.92 656.33,793.28 666.56,797.10 C676.79,800.92 687.01,811.90 697.24,811.90 C707.47,811.90 717.69,810.30 727.92,810.30 C738.15,810.30 748.37,813.90 758.60,813.90 C768.83,813.90 779.05,805.12 789.28,802.50 C799.51,799.88 809.73,800.88 819.96,798.20 C830.19,795.52 840.41,790.40 850.64,786.40 C860.87,782.40 871.09,774.20 881.32,774.20 C891.55,774.20 901.77,779.87 912.00,782.00 C922.23,784.13 932.45,785.57 942.68,787.00 L942.68,813.90 L605.20,813.90 Z" fill="#e1e1e1"/><path d="M605.20,779.60 C615.43,782.84 625.65,786.08 635.88,789.00 C646.11,791.92 656.33,793.28 666.56,797.10 C676.79,800.92 687.01,811.90 697.24,811.90 C707.47,811.90 717.69,810.30 727.92,810.30 C738.15,810.30 748.37,813.90 758.60,813.90 C768.83,813.90 779.05,805.12 789.28,802.50 C799.51,799.88 809.73,800.88 819.96,798.20 C830.19,795.52 840.41,790.40 850.64,786.40 C860.87,782.40 871.09,774.20 881.32,774.20 C891.55,774.20 901.77,779.87 912.00,782.00 C922.23,784.13 932.45,785.57 942.68,787.00" fill="none" stroke="#9d9d9d" stroke-width="1.3"/><circle cx="758.60" cy="813.90" r="3.8" fill="#e8646c"/><circle cx="881.32" cy="774.20" r="3.8" fill="#a6d16f"/><path d="M605.20,828.70 C615.43,830.45 625.65,832.20 635.88,837.20 C646.11,842.20 656.33,858.70 666.56,858.70 C676.79,858.70 687.01,857.60 697.24,856.70 C707.47,855.80 717.69,853.30 727.92,853.30 C738.15,853.30 748.37,868.50 758.60,868.50 C768.83,868.50 779.05,849.70 789.28,849.70 C799.51,849.70 809.73,849.70 819.96,849.70 C830.19,849.70 840.41,840.50 850.64,840.50 C860.87,840.50 871.09,857.30 881.32,857.30 C891.55,857.30 901.77,839.33 912.00,838.00 C922.23,836.67 932.45,836.33 942.68,836.00 L942.68,868.50 L605.20,868.50 Z" fill="#e1e1e1"/><path d="M605.20,828.70 C615.43,830.45 625.65,832.20 635.88,837.20 C646.11,842.20 656.33,858.70 666.56,858.70 C676.79,858.70 687.01,857.60 697.24,856.70 C707.47,855.80 717.69,853.30 727.92,853.30 C738.15,853.30 748.37,868.50 758.60,868.50 C768.83,868.50 779.05,849.70 789.28,849.70 C799.51,849.70 809.73,849.70 819.96,849.70 C830.19,849.70 840.41,840.50 850.64,840.50 C860.87,840.50 871.09,857.30 881.32,857.30 C891.55,857.30 901.77,839.33 912.00,838.00 C922.23,836.67 932.45,836.33 942.68,836.00" fill="none" stroke="#9d9d9d" stroke-width="1.3"/><circle cx="758.60" cy="868.50" r="3.8" fill="#e8646c"/><circle cx="605.20" cy="828.70" r="3.8" fill="#a6d16f"/><path d="M605.20,889.60 C615.43,898.55 625.65,907.50 635.88,907.50 C646.11,907.50 656.33,891.40 666.56,891.40 C676.79,891.40 687.01,914.43 697.24,916.10 C707.47,917.77 717.69,917.52 727.92,918.60 C738.15,919.68 748.37,922.60 758.60,922.60 C768.83,922.60 779.05,884.30 789.28,884.30 C799.51,884.30 809.73,887.60 819.96,887.60 C830.19,887.60 840.41,882.90 850.64,882.90 C860.87,882.90 871.09,884.30 881.32,884.30 C891.55,884.30 901.77,884.13 912.00,884.00 C922.23,883.87 932.45,883.68 942.68,883.50 L942.68,922.60 L605.20,922.60 Z" fill="#e1e1e1"/><path d="M605.20,889.60 C615.43,898.55 625.65,907.50 635.88,907.50 C646.11,907.50 656.33,891.40 666.56,891.40 C676.79,891.40 687.01,914.43 697.24,916.10 C707.47,917.77 717.69,917.52 727.92,918.60 C738.15,919.68 748.37,922.60 758.60,922.60 C768.83,922.60 779.05,884.30 789.28,884.30 C799.51,884.30 809.73,887.60 819.96,887.60 C830.19,887.60 840.41,882.90 850.64,882.90 C860.87,882.90 871.09,884.30 881.32,884.30 C891.55,884.30 901.77,884.13 912.00,884.00 C922.23,883.87 932.45,883.68 942.68,883.50" fill="none" stroke="#9d9d9d" stroke-width="1.3"/><circle cx="758.60" cy="922.60" r="3.8" fill="#e8646c"/><circle cx="850.64" cy="882.90" r="3.8" fill="#a6d16f"/><path d="M605.20,937.20 C615.43,943.98 625.65,950.75 635.88,955.10 C646.11,959.45 656.33,963.30 666.56,963.30 C676.79,963.30 687.01,963.30 697.24,963.30 C707.47,963.30 717.69,973.90 727.92,973.90 C738.15,973.90 748.37,964.80 758.60,964.80 C768.83,964.80 779.05,970.40 789.28,970.40 C799.51,970.40 809.73,955.90 819.96,955.90 C830.19,955.90 840.41,957.90 850.64,957.90 C860.87,957.90 871.09,952.00 881.32,952.00 C891.55,952.00 901.77,976.70 912.00,976.70 C922.23,976.70 932.45,968.40 942.68,960.10 L942.68,976.70 L605.20,976.70 Z" fill="#e1e1e1"/><path d="M605.20,937.20 C615.43,943.98 625.65,950.75 635.88,955.10 C646.11,959.45 656.33,963.30 666.56,963.30 C676.79,963.30 687.01,963.30 697.24,963.30 C707.47,963.30 717.69,973.90 727.92,973.90 C738.15,973.90 748.37,964.80 758.60,964.80 C768.83,964.80 779.05,970.40 789.28,970.40 C799.51,970.40 809.73,955.90 819.96,955.90 C830.19,955.90 840.41,957.90 850.64,957.90 C860.87,957.90 871.09,952.00 881.32,952.00 C891.55,952.00 901.77,976.70 912.00,976.70 C922.23,976.70 932.45,968.40 942.68,960.10" fill="none" stroke="#9d9d9d" stroke-width="1.3"/><circle cx="912.00" cy="976.70" r="3.8" fill="#e8646c"/><circle cx="605.20" cy="937.20" r="3.8" fill="#a6d16f"/><path d="M605.20,1003.25 C615.43,1005.24 625.65,1007.23 635.88,1011.40 C646.11,1015.57 656.33,1028.25 666.56,1028.25 C676.79,1028.25 687.01,1022.60 697.24,1022.60 C707.47,1022.60 717.69,1030.40 727.92,1030.40 C738.15,1030.40 748.37,1027.55 758.60,1026.20 C768.83,1024.85 779.05,1023.78 789.28,1022.30 C799.51,1020.82 809.73,1020.63 819.96,1017.30 C830.19,1013.97 840.41,990.75 850.64,990.75 C860.87,990.75 871.09,1008.25 881.32,1008.25 C891.55,1008.25 901.77,1004.80 912.00,1004.80 C922.23,1004.80 932.45,1006.52 942.68,1008.25 L942.68,1030.40 L605.20,1030.40 Z" fill="#e1e1e1"/><path d="M605.20,1003.25 C615.43,1005.24 625.65,1007.23 635.88,1011.40 C646.11,1015.57 656.33,1028.25 666.56,1028.25 C676.79,1028.25 687.01,1022.60 697.24,1022.60 C707.47,1022.60 717.69,1030.40 727.92,1030.40 C738.15,1030.40 748.37,1027.55 758.60,1026.20 C768.83,1024.85 779.05,1023.78 789.28,1022.30 C799.51,1020.82 809.73,1020.63 819.96,1017.30 C830.19,1013.97 840.41,990.75 850.64,990.75 C860.87,990.75 871.09,1008.25 881.32,1008.25 C891.55,1008.25 901.77,1004.80 912.00,1004.80 C922.23,1004.80 932.45,1006.52 942.68,1008.25" fill="none" stroke="#9d9d9d" stroke-width="1.3"/><circle cx="727.92" cy="1030.40" r="3.8" fill="#e8646c"/><circle cx="850.64" cy="990.75" r="3.8" fill="#a6d16f"/><path d="M605.20,1045.30 C615.43,1053.83 625.65,1062.37 635.88,1068.40 C646.11,1074.43 656.33,1081.50 666.56,1081.50 C676.79,1081.50 687.01,1080.50 697.24,1080.50 C707.47,1080.50 717.69,1084.90 727.92,1084.90 C738.15,1084.90 748.37,1083.43 758.60,1080.50 C768.83,1077.57 779.05,1067.32 789.28,1062.80 C799.51,1058.28 809.73,1056.23 819.96,1053.40 C830.19,1050.57 840.41,1045.80 850.64,1045.80 C860.87,1045.80 871.09,1049.23 881.32,1051.40 C891.55,1053.57 901.77,1057.47 912.00,1058.80 C922.23,1060.13 932.45,1060.47 942.68,1060.80 L942.68,1084.90 L605.20,1084.90 Z" fill="#e1e1e1"/><path d="M605.20,1045.30 C615.43,1053.83 625.65,1062.37 635.88,1068.40 C646.11,1074.43 656.33,1081.50 666.56,1081.50 C676.79,1081.50 687.01,1080.50 697.24,1080.50 C707.47,1080.50 717.69,1084.90 727.92,1084.90 C738.15,1084.90 748.37,1083.43 758.60,1080.50 C768.83,1077.57 779.05,1067.32 789.28,1062.80 C799.51,1058.28 809.73,1056.23 819.96,1053.40 C830.19,1050.57 840.41,1045.80 850.64,1045.80 C860.87,1045.80 871.09,1049.23 881.32,1051.40 C891.55,1053.57 901.77,1057.47 912.00,1058.80 C922.23,1060.13 932.45,1060.47 942.68,1060.80" fill="none" stroke="#9d9d9d" stroke-width="1.3"/><circle cx="727.92" cy="1084.90" r="3.8" fill="#e8646c"/><circle cx="605.20" cy="1045.30" r="3.8" fill="#a6d16f"/><path d="M605.20,1099.50 C615.43,1102.71 625.65,1105.92 635.88,1109.60 C646.11,1113.28 656.33,1121.20 666.56,1121.60 C676.79,1122.00 687.01,1121.80 697.24,1122.20 C707.47,1122.60 717.69,1127.95 727.92,1130.70 C738.15,1133.45 748.37,1138.70 758.60,1138.70 C768.83,1138.70 779.05,1121.27 789.28,1120.20 C799.51,1119.13 809.73,1119.67 819.96,1118.60 C830.19,1117.53 840.41,1099.00 850.64,1099.00 C860.87,1099.00 871.09,1104.20 881.32,1104.20 C891.55,1104.20 901.77,1104.20 912.00,1104.20 C922.23,1104.20 932.45,1106.20 942.68,1108.20 L942.68,1138.70 L605.20,1138.70 Z" fill="#e1e1e1"/><path d="M605.20,1099.50 C615.43,1102.71 625.65,1105.92 635.88,1109.60 C646.11,1113.28 656.33,1121.20 666.56,1121.60 C676.79,1122.00 687.01,1121.80 697.24,1122.20 C707.47,1122.60 717.69,1127.95 727.92,1130.70 C738.15,1133.45 748.37,1138.70 758.60,1138.70 C768.83,1138.70 779.05,1121.27 789.28,1120.20 C799.51,1119.13 809.73,1119.67 819.96,1118.60 C830.19,1117.53 840.41,1099.00 850.64,1099.00 C860.87,1099.00 871.09,1104.20 881.32,1104.20 C891.55,1104.20 901.77,1104.20 912.00,1104.20 C922.23,1104.20 932.45,1106.20 942.68,1108.20" fill="none" stroke="#9d9d9d" stroke-width="1.3"/><circle cx="758.60" cy="1138.70" r="3.8" fill="#e8646c"/><circle cx="850.64" cy="1099.00" r="3.8" fill="#a6d16f"/><path d="M605.20,1164.40 C615.43,1169.28 625.65,1174.15 635.88,1178.90 C646.11,1183.65 656.33,1192.90 666.56,1192.90 C676.79,1192.90 687.01,1181.90 697.24,1181.90 C707.47,1181.90 717.69,1181.90 727.92,1181.90 C738.15,1181.90 748.37,1186.90 758.60,1186.90 C768.83,1186.90 779.05,1160.40 789.28,1160.40 C799.51,1160.40 809.73,1163.80 819.96,1163.80 C830.19,1163.80 840.41,1158.57 850.64,1156.80 C860.87,1155.03 871.09,1153.20 881.32,1153.20 C891.55,1153.20 901.77,1164.52 912.00,1167.80 C922.23,1171.08 932.45,1171.99 942.68,1172.90 L942.68,1192.90 L605.20,1192.90 Z" fill="#e1e1e1"/><path d="M605.20,1164.40 C615.43,1169.28 625.65,1174.15 635.88,1178.90 C646.11,1183.65 656.33,1192.90 666.56,1192.90 C676.79,1192.90 687.01,1181.90 697.24,1181.90 C707.47,1181.90 717.69,1181.90 727.92,1181.90 C738.15,1181.90 748.37,1186.90 758.60,1186.90 C768.83,1186.90 779.05,1160.40 789.28,1160.40 C799.51,1160.40 809.73,1163.80 819.96,1163.80 C830.19,1163.80 840.41,1158.57 850.64,1156.80 C860.87,1155.03 871.09,1153.20 881.32,1153.20 C891.55,1153.20 901.77,1164.52 912.00,1167.80 C922.23,1171.08 932.45,1171.99 942.68,1172.90" fill="none" stroke="#9d9d9d" stroke-width="1.3"/><circle cx="666.56" cy="1192.90" r="3.8" fill="#e8646c"/><circle cx="881.32" cy="1153.20" r="3.8" fill="#a6d16f"/></svg>
<div class="t" style="left:699.51px;top:518.11px;font-size:16.82px;line-height:16.82px;color:#727272;font-family:"Liberation Mono", monospace;transform:scaleX(0.86);">53</div>
<div class="t" style="left:848.52px;top:509.31px;font-size:16.82px;line-height:16.82px;color:#727272;font-family:"Liberation Mono", monospace;transform:scaleX(0.86);">225</div>
<div class="t" style="left:761.11px;top:571.61px;font-size:16.82px;line-height:16.82px;color:#727272;font-family:"Liberation Mono", monospace;transform:scaleX(0.86);">35</div>
<div class="t" style="left:614.02px;top:562.81px;font-size:16.82px;line-height:16.82px;color:#727272;font-family:"Liberation Mono", monospace;transform:scaleX(0.86);">147</div>
<div class="t" style="left:699.82px;top:626.41px;font-size:16.82px;line-height:16.82px;color:#727272;font-family:"Liberation Mono", monospace;transform:scaleX(0.86);">19</div>
<div class="t" style="left:879.12px;top:617.71px;font-size:16.82px;line-height:16.82px;color:#727272;font-family:"Liberation Mono", monospace;transform:scaleX(0.86);">141</div>
<div class="t" style="left:699.42px;top:679.61px;font-size:16.82px;line-height:16.82px;color:#727272;font-family:"Liberation Mono", monospace;transform:scaleX(0.86);">22</div>
<div class="t" style="left:613.32px;top:670.61px;font-size:16.82px;line-height:16.82px;color:#727272;font-family:"Liberation Mono", monospace;transform:scaleX(0.86);">97</div>
<div class="t" style="left:730.42px;top:734.41px;font-size:16.82px;line-height:16.82px;color:#727272;font-family:"Liberation Mono", monospace;transform:scaleX(0.86);">21</div>
<div class="t" style="left:852.74px;top:725.71px;font-size:16.82px;line-height:16.82px;color:#727272;font-family:"Liberation Mono", monospace;transform:scaleX(0.86);">70</div>
<div class="t" style="left:761.32px;top:788.01px;font-size:16.82px;line-height:16.82px;color:#727272;font-family:"Liberation Mono", monospace;transform:scaleX(0.86);">17</div>
<div class="t" style="left:883.04px;top:778.81px;font-size:16.82px;line-height:16.82px;color:#727272;font-family:"Liberation Mono", monospace;transform:scaleX(0.86);">63</div>
<div class="t" style="left:761.32px;top:842.71px;font-size:16.82px;line-height:16.82px;color:#727272;font-family:"Liberation Mono", monospace;transform:scaleX(0.86);">12</div>
<div class="t" style="left:613.24px;top:833.71px;font-size:16.82px;line-height:16.82px;color:#727272;font-family:"Liberation Mono", monospace;transform:scaleX(0.86);">67</div>
<div class="t" style="left:761.32px;top:896.91px;font-size:16.82px;line-height:16.82px;color:#727272;font-family:"Liberation Mono", monospace;transform:scaleX(0.86);">10</div>
<div class="t" style="left:852.91px;top:886.81px;font-size:16.82px;line-height:16.82px;color:#727272;font-family:"Liberation Mono", monospace;transform:scaleX(0.86);">39</div>
<div class="t" style="left:918.74px;top:950.41px;font-size:16.82px;line-height:16.82px;color:#727272;font-family:"Liberation Mono", monospace;transform:scaleX(0.86);">7</div>
<div class="t" style="left:613.91px;top:941.91px;font-size:16.82px;line-height:16.82px;color:#727272;font-family:"Liberation Mono", monospace;transform:scaleX(0.86);">51</div>
<div class="t" style="left:734.76px;top:1005.01px;font-size:16.82px;line-height:16.82px;color:#727272;font-family:"Liberation Mono", monospace;transform:scaleX(0.86);">4</div>
<div class="t" style="left:852.81px;top:996.11px;font-size:16.82px;line-height:16.82px;color:#727272;font-family:"Liberation Mono", monospace;transform:scaleX(0.86);">52</div>
<div class="t" style="left:734.52px;top:1058.51px;font-size:16.82px;line-height:16.82px;color:#727272;font-family:"Liberation Mono", monospace;transform:scaleX(0.86);">9</div>
<div class="t" style="left:613.51px;top:1049.91px;font-size:16.82px;line-height:16.82px;color:#727272;font-family:"Liberation Mono", monospace;transform:scaleX(0.86);">30</div>
<div class="t" style="left:765.71px;top:1113.41px;font-size:16.82px;line-height:16.82px;color:#727272;font-family:"Liberation Mono", monospace;transform:scaleX(0.86);">3</div>
<div class="t" style="left:853.02px;top:1104.71px;font-size:16.82px;line-height:16.82px;color:#727272;font-family:"Liberation Mono", monospace;transform:scaleX(0.86);">17</div>
<div class="t" style="left:673.72px;top:1167.01px;font-size:16.82px;line-height:16.82px;color:#727272;font-family:"Liberation Mono", monospace;transform:scaleX(0.86);">2</div>
<div class="t" style="left:884.12px;top:1158.31px;font-size:16.82px;line-height:16.82px;color:#727272;font-family:"Liberation Mono", monospace;transform:scaleX(0.86);">12</div>
<div class="t" style="left:176.48px;top:512.68px;font-size:24.71px;line-height:24.71px;color:#747474;transform:scaleX(0.9610);">Washers &amp; Dryers</div>
<div class="t" style="left:499.11px;top:512.69px;font-family:&quot;Liberation Mono&quot;,monospace;font-size:26.36px;line-height:26.36px;color:#7a7a7a;transform:scaleX(0.8604)">1,580</div>
<div class="t" style="left:1306.84px;top:512.69px;font-family:&quot;Liberation Mono&quot;,monospace;font-size:26.36px;line-height:26.36px;color:#7a7a7a;transform:scaleX(0.8604)">12.5</div>
<div class="t" style="left:1519.89px;top:512.69px;font-family:&quot;Liberation Mono&quot;,monospace;font-size:26.36px;line-height:26.36px;color:#7a7a7a;transform:scaleX(0.8604)">247</div>
<div class="t" style="left:140.16px;top:566.93px;font-size:24.71px;line-height:24.71px;color:#747474;transform:scaleX(0.9825);">Projectors &amp; Screens</div>
<div class="t" style="left:526.45px;top:566.94px;font-family:&quot;Liberation Mono&quot;,monospace;font-size:26.36px;line-height:26.36px;color:#7a7a7a;transform:scaleX(0.8604)">973</div>
<div class="t" style="left:1307.18px;top:566.94px;font-family:&quot;Liberation Mono&quot;,monospace;font-size:26.36px;line-height:26.36px;color:#7a7a7a;transform:scaleX(0.8604)">21.7</div>
<div class="t" style="left:1519.66px;top:566.94px;font-family:&quot;Liberation Mono&quot;,monospace;font-size:26.36px;line-height:26.36px;color:#7a7a7a;transform:scaleX(0.8604)">382</div>
<div class="t" style="left:225.02px;top:621.18px;font-size:24.71px;line-height:24.71px;color:#747474;transform:scaleX(1.0030);">Refrigerators</div>
<div class="t" style="left:526.45px;top:621.19px;font-family:&quot;Liberation Mono&quot;,monospace;font-size:26.36px;line-height:26.36px;color:#7a7a7a;transform:scaleX(0.8604)">953</div>
<div class="t" style="left:1293.23px;top:621.19px;font-family:&quot;Liberation Mono&quot;,monospace;font-size:26.36px;line-height:26.36px;color:#7a7a7a;transform:scaleX(0.8604)">-36.8</div>
<div class="t" style="left:280.32px;top:675.43px;font-size:24.71px;line-height:24.71px;color:#747474;">Laptops</div>
<div class="t" style="left:526.45px;top:675.44px;font-family:&quot;Liberation Mono&quot;,monospace;font-size:26.36px;line-height:26.36px;color:#7a7a7a;transform:scaleX(0.8604)">668</div>
<div class="t" style="left:1306.50px;top:675.44px;font-family:&quot;Liberation Mono&quot;,monospace;font-size:26.36px;line-height:26.36px;color:#7a7a7a;transform:scaleX(0.8604)">27.1</div>
<div class="t" style="left:296.28px;top:729.68px;font-size:24.71px;line-height:24.71px;color:#747474;transform:scaleX(0.9707);">Lamps</div>
<div class="t" style="left:526.10px;top:729.69px;font-family:&quot;Liberation Mono&quot;,monospace;font-size:26.36px;line-height:26.36px;color:#7a7a7a;transform:scaleX(0.8604)">471</div>
<div class="t" style="left:1306.84px;top:729.69px;font-family:&quot;Liberation Mono&quot;,monospace;font-size:26.36px;line-height:26.36px;color:#7a7a7a;transform:scaleX(0.8604)">72.3</div>
<div class="t" style="left:213.78px;top:783.93px;font-size:24.71px;line-height:24.71px;color:#747474;transform:scaleX(0.9752);">Water Heaters</div>
<div class="t" style="left:526.45px;top:783.94px;font-family:&quot;Liberation Mono&quot;,monospace;font-size:26.36px;line-height:26.36px;color:#7a7a7a;transform:scaleX(0.8604)">443</div>
<div class="t" style="left:1306.84px;top:783.94px;font-family:&quot;Liberation Mono&quot;,monospace;font-size:26.36px;line-height:26.36px;color:#7a7a7a;transform:scaleX(0.8604)">21.3</div>
<div class="t" style="left:268.42px;top:838.18px;font-size:24.71px;line-height:24.71px;color:#747474;transform:scaleX(1.0542);">Monitors</div>
<div class="t" style="left:526.10px;top:838.19px;font-family:&quot;Liberation Mono&quot;,monospace;font-size:26.36px;line-height:26.36px;color:#7a7a7a;transform:scaleX(0.8604)">424</div>
<div class="t" style="left:1306.95px;top:838.19px;font-family:&quot;Liberation Mono&quot;,monospace;font-size:26.36px;line-height:26.36px;color:#7a7a7a;transform:scaleX(0.8604)">-0.2</div>
<div class="t" style="left:237.52px;top:892.43px;font-size:24.71px;line-height:24.71px;color:#747474;transform:scaleX(1.0022);">Microwaves</div>
<div class="t" style="left:526.56px;top:892.44px;font-family:&quot;Liberation Mono&quot;,monospace;font-size:26.36px;line-height:26.36px;color:#7a7a7a;transform:scaleX(0.8604)">319</div>
<div class="t" style="left:1320.45px;top:892.44px;font-family:&quot;Liberation Mono&quot;,monospace;font-size:26.36px;line-height:26.36px;color:#7a7a7a;transform:scaleX(0.8604)">4.5</div>
<div class="t" style="left:266.75px;top:946.68px;font-size:24.71px;line-height:24.71px;color:#747474;transform:scaleX(0.9851);">Desktops</div>
<div class="t" style="left:526.45px;top:946.69px;font-family:&quot;Liberation Mono&quot;,monospace;font-size:26.36px;line-height:26.36px;color:#7a7a7a;transform:scaleX(0.8604)">266</div>
<div class="t" style="left:1135.45px;top:946.69px;font-family:&quot;Liberation Mono&quot;,monospace;font-size:26.36px;line-height:26.36px;color:#7a7a7a;transform:scaleX(0.8604)">23</div>
<div class="t" style="left:1320.79px;top:946.69px;font-family:&quot;Liberation Mono&quot;,monospace;font-size:26.36px;line-height:26.36px;color:#7a7a7a;transform:scaleX(0.8604)">8.7</div>
<div class="t" style="left:192.00px;top:1000.93px;font-size:24.71px;line-height:24.71px;color:#747474;transform:scaleX(1.0026);">Air Conditioners</div>
<div class="t" style="left:526.45px;top:1000.94px;font-family:&quot;Liberation Mono&quot;,monospace;font-size:26.36px;line-height:26.36px;color:#7a7a7a;transform:scaleX(0.8604)">253</div>
<div class="t" style="left:1121.85px;top:1000.94px;font-family:&quot;Liberation Mono&quot;,monospace;font-size:26.36px;line-height:26.36px;color:#7a7a7a;transform:scaleX(0.8604)">138</div>
<div class="t" style="left:1306.84px;top:1000.94px;font-family:&quot;Liberation Mono&quot;,monospace;font-size:26.36px;line-height:26.36px;color:#7a7a7a;transform:scaleX(0.8604)">54.5</div>
<div class="t" style="left:1519.55px;top:1000.94px;font-family:&quot;Liberation Mono&quot;,monospace;font-size:26.36px;line-height:26.36px;color:#7a7a7a;transform:scaleX(0.8604)">216</div>
<div class="t" style="left:101.69px;top:1055.18px;font-size:24.71px;line-height:24.71px;color:#747474;transform:scaleX(0.9684);">Printers, Scanners &amp; Fax</div>
<div class="t" style="left:526.56px;top:1055.19px;font-family:&quot;Liberation Mono&quot;,monospace;font-size:26.36px;line-height:26.36px;color:#7a7a7a;transform:scaleX(0.8604)">219</div>
<div class="t" style="left:1148.72px;top:1055.19px;font-family:&quot;Liberation Mono&quot;,monospace;font-size:26.36px;line-height:26.36px;color:#7a7a7a;transform:scaleX(0.8604)">1</div>
<div class="t" style="left:1320.45px;top:1055.19px;font-family:&quot;Liberation Mono&quot;,monospace;font-size:26.36px;line-height:26.36px;color:#7a7a7a;transform:scaleX(0.8604)">0.3</div>
<div class="t" style="left:1519.66px;top:1055.19px;font-family:&quot;Liberation Mono&quot;,monospace;font-size:26.36px;line-height:26.36px;color:#7a7a7a;transform:scaleX(0.8604)">379</div>
<div class="t" style="left:115.70px;top:1109.43px;font-size:24.71px;line-height:24.71px;color:#747474;transform:scaleX(0.9729);">Computers Accessories</div>
<div class="t" style="left:526.45px;top:1109.44px;font-family:&quot;Liberation Mono&quot;,monospace;font-size:26.36px;line-height:26.36px;color:#7a7a7a;transform:scaleX(0.8604)">128</div>
<div class="t" style="left:1121.85px;top:1109.44px;font-family:&quot;Liberation Mono&quot;,monospace;font-size:26.36px;line-height:26.36px;color:#7a7a7a;transform:scaleX(0.8604)">-18</div>
<div class="t" style="left:1293.23px;top:1109.44px;font-family:&quot;Liberation Mono&quot;,monospace;font-size:26.36px;line-height:26.36px;color:#7a7a7a;transform:scaleX(0.8604)">-14.3</div>
<div class="t" style="left:1519.20px;top:1109.44px;font-family:&quot;Liberation Mono&quot;,monospace;font-size:26.36px;line-height:26.36px;color:#7a7a7a;transform:scaleX(0.8604)">654</div>
<div class="t" style="left:318.31px;top:1163.68px;font-size:24.71px;line-height:24.71px;color:#747474;transform:scaleX(0.9072);">Fans</div>
<div class="t" style="left:540.05px;top:1163.69px;font-family:&quot;Liberation Mono&quot;,monospace;font-size:26.36px;line-height:26.36px;color:#7a7a7a;transform:scaleX(0.8604)">83</div>
<div class="t" style="left:1121.96px;top:1163.69px;font-family:&quot;Liberation Mono&quot;,monospace;font-size:26.36px;line-height:26.36px;color:#7a7a7a;transform:scaleX(0.8604)">-39</div>
<div class="t" style="left:1292.89px;top:1163.69px;font-family:&quot;Liberation Mono&quot;,monospace;font-size:26.36px;line-height:26.36px;color:#7a7a7a;transform:scaleX(0.8604)">-46.4</div>
<div class="t" style="left:1519.89px;top:1163.69px;font-family:&quot;Liberation Mono&quot;,monospace;font-size:26.36px;line-height:26.36px;color:#7a7a7a;transform:scaleX(0.8604)">287</div>
<div class="r" style="left:5.00px;top:1237.70px;width:2293.00px;height:1.80px;background:#dadada;"></div>
<div class="t" style="left:5.28px;top:1250.61px;font-size:23.26px;line-height:23.26px;color:#7a7a7a;transform:scaleX(0.9113);">Total rows: 14</div>
<div class="t" style="left:1003.31px;top:1251.11px;font-size:22.67px;line-height:22.67px;color:#7a7a7a;transform:scaleX(0.9324);">Rows per page:</div>
<div class="r" style="left:1159.40px;top:1247.40px;width:93.90px;height:35.10px;border:1.5px solid #d8d8d8;box-sizing:border-box;"></div>
<div class="t" style="left:1179.30px;top:1254.58px;font-size:22.82px;line-height:22.82px;color:#6e6e6e;transform:scaleX(0.9603);">All</div>
<div class="r" style="left:2119.80px;top:1249.70px;width:98.00px;height:34.70px;border:1.5px solid #d8d8d8;box-sizing:border-box;"></div>
<div class="t" style="left:2142.10px;top:1255.31px;font-size:24.56px;line-height:24.56px;color:#7a7a7a;transform:scaleX(0.8690);">100%</div>
<svg width="2304" height="1295" style="left:0;top:0"><polyline points="1213.8,1260 1223.6,1270.3 1233.4,1260" fill="none" stroke="#7a7a7a" stroke-width="1.5"/><rect x="2086.3" y="1264.8" width="17.3" height="1.9" fill="#7a7a7a"/><path d="M2228.9,1266.3 H2247.4 M2238.15,1257 V1275.6" stroke="#7a7a7a" stroke-width="1.9"/><rect x="2266.3" y="1248" width="6" height="5.9" fill="#d3d3d3"/><rect x="2278.4" y="1248" width="6.1" height="5.9" fill="#d3d3d3"/><rect x="2266.3" y="1260.2" width="6" height="6.1" fill="#d3d3d3"/><rect x="2265.2" y="1271.6" width="8.2" height="7.7" fill="#ec8888"/><rect x="2277.3" y="1259.4" width="8.3" height="19.9" fill="#ecc66a"/><rect x="2289.6" y="1247.3" width="8.1" height="32" fill="#9bd594"/></svg>
<div class="r" style="left:1390.00px;top:589.00px;width:546.70px;height:402.30px;background:#eeeeee;box-shadow:0 1px 9px rgba(0,0,0,0.13);"></div>
<svg width="2304" height="1295" style="left:0;top:0"><defs><filter id="tsh" x="-50%" y="-50%" width="200%" height="200%"><feGaussianBlur stdDeviation="3"/></filter></defs><path d="M1391,614 L1370.5,633.2 L1391,653 Z" fill="rgba(0,0,0,0.13)" filter="url(#tsh)"/><path d="M1391,615.5 L1372,633.2 L1391,651 Z" fill="#eeeeee"/><rect x="1391" y="605" width="8" height="60" fill="#eeeeee"/><circle cx="1418.3" cy="616.8" r="5.3" fill="none" stroke="#8a8a8a" stroke-width="1.5"/><path d="M1409.2,631 Q1410,622.5 1418.3,622.5 Q1424,622.5 1426,626" fill="none" stroke="#8a8a8a" stroke-width="1.5"/><path d="M1422.5,627.5 L1425.3,630.8 L1430,625.5" fill="none" stroke="#8a8a8a" stroke-width="1.4"/><polyline points="1555.5,619.5 1561.6,626.2 1567.7,619.5" fill="none" stroke="#727272" stroke-width="2.2"/><rect x="1431.4" y="636.3" width="136.8" height="1.5" fill="#d9d9d9"/><defs><clipPath id="avb"><circle cx="1426.2" cy="681.1" r="21.35"/></clipPath></defs>
<g clip-path="url(#avb)">
<circle cx="1426.2" cy="681.1" r="21.35" fill="#e3e3e3"/>
<path d="M1417.18,673.08 Q1416.68,660.05 1427.20,660.25 Q1436.22,661.05 1435.72,672.08 Z" fill="#858585"/>
<path d="M1419.18,681.10 L1418.18,688.12 Q1426.20,696.14 1438.23,690.62 L1434.72,681.10 Z" fill="#d3d3d3"/>
<ellipse cx="1427.20" cy="675.89" rx="7.62" ry="10.42" fill="#c2c2c2"/>
<ellipse cx="1427.20" cy="669.07" rx="5.51" ry="3.51" fill="#cdcdcd"/>
<ellipse cx="1423.99" cy="674.68" rx="1.70" ry="1.40" fill="#8f8f8f"/>
<ellipse cx="1430.41" cy="674.68" rx="1.70" ry="1.40" fill="#8f8f8f"/>
<circle cx="1417.38" cy="677.49" r="1.30" fill="#6a6a6a"/>
<path d="M1402.14,711.17 L1409.16,688.62 Q1413.17,687.11 1417.18,687.11 Q1419.18,695.63 1427.20,695.43 Q1435.22,695.13 1438.23,690.72 Q1441.24,691.62 1443.74,693.63 L1450.26,711.17 Z" fill="#747474"/>
</g></svg>
<div class="t" style="left:1441.50px;top:611.90px;font-size:20.20px;line-height:20.20px;color:#7c7c7c;transform:scaleX(0.8859);">Assign a user</div>
<div class="t" style="left:1462.07px;top:670.34px;font-size:21.80px;line-height:21.80px;color:#7c7c7c;transform:scaleX(0.9464);">Chandra Vadana Rajamohan</div>
<div class="r" style="left:1408.30px;top:721.30px;width:509.30px;height:57.50px;background:#e7e7e7;border:1.5px solid #dddddd;border-bottom:2.5px solid #d6d6d6;box-sizing:border-box;"></div>
<div class="r" style="left:1573.00px;top:727.50px;width:64.50px;height:48.00px;background:#dfdfdf;box-shadow:inset 0 0 3px rgba(0,0,0,0.12);"></div>
<div class="r" style="left:1408.90px;top:778.80px;width:508.70px;height:121.80px;background:#eeeeee;border:1.5px solid #dcdcdc;border-top:none;box-sizing:border-box;"></div>
<div class="r" style="left:1626.00px;top:787.00px;width:73.50px;height:29.00px;background:#d6d6d6;"></div>
<svg width="2304" height="1295" style="left:0;top:0"><path d="M1481.2,741.7 H1491 M1477,758.3 H1486.8 M1487.8,741.7 L1480.2,758.3" fill="none" stroke="#8a8a8a" stroke-width="1.6"/><path d="M1521,741 V752.5 Q1521,758 1528,758 Q1535,758 1535,752.5 V741 M1519.5,760.5 H1536.5" fill="none" stroke="#8a8a8a" stroke-width="1.6"/><rect x="1561.3" y="738" width="1.4" height="23" fill="#d3d3d3"/><path d="M1588,761 L1597.2,737.8 L1606.4,761 M1591.3,752.5 H1603" fill="none" stroke="#8a8a8a" stroke-width="2.1"/><rect x="1579.4" y="762.4" width="35.9" height="6.4" fill="#9c9c9c"/><polyline points="1619.5,746 1626.5,752.3 1633.5,746" fill="none" stroke="#a3a3a3" stroke-width="1.3"/><rect x="1643" y="761.8" width="34" height="6.9" fill="#f2f2f2"/><path d="M1651.5,751.5 L1663.5,739 Q1666,737 1668.5,739.5 Q1670.7,742 1668.5,744.5 L1656.5,756.5 Z M1651.5,751.5 L1656.5,756.5" fill="none" stroke="#8a8a8a" stroke-width="1.5" stroke-linejoin="round"/><path d="M1647,757.8 L1651,751.5 L1655,755.5 Z" fill="#7299c8"/><polyline points="1681.5,746 1688,752.8 1694.5,746" fill="none" stroke="#a3a3a3" stroke-width="1.3"/><path d="M1731.6,743.8 A4.56,4.56 0 0 1 1738.3,750 M1732.4,756 A4.56,4.56 0 0 1 1725.9,749.6 M1728.8,752.9 L1734.5,747.4" fill="none" stroke="#858585" stroke-width="1.9" stroke-linecap="round"/><rect x="1410" y="930.3" width="27.8" height="24.6" fill="#f6f6f6" stroke="#8a8a8a" stroke-width="1.6"/><rect x="1428.5" y="930.3" width="9.3" height="24.6" fill="#a9c8e9" stroke="#6a93c4" stroke-width="1.4"/><rect x="1427" y="930.3" width="2" height="24.6" fill="#8a8a8a"/></svg>
<div class="t" style="left:1429.66px;top:736.90px;font-size:25.87px;line-height:25.87px;color:#858585;font-weight:700;transform:scaleX(0.8554);">B</div>
<div class="t" style="left:1423.90px;top:790.64px;font-size:21.80px;line-height:21.80px;color:#7c7c7c;transform:scaleX(0.9724);">How can we improve</div>
<div class="t" style="left:1626.05px;top:790.64px;font-size:21.80px;line-height:21.80px;color:#7c7c7c;transform:scaleX(0.9518);">margins</div>
<div class="t" style="left:1699.59px;top:790.64px;font-size:21.80px;line-height:21.80px;color:#7c7c7c;transform:scaleX(0.8122);">?</div>
<div class="t" style="left:1714.81px;top:790.64px;font-size:21.80px;line-height:21.80px;color:#7c7c7c;transform:scaleX(0.9669);">Refer to this</div>
<div class="t" style="left:1424.71px;top:818.74px;font-size:21.80px;line-height:21.80px;color:#7c7c7c;transform:scaleX(1.0164);">document.</div>
<div class="r" style="left:1675.30px;top:919.60px;width:117.10px;height:53.90px;background:#e6e6e6;"></div>
<div class="r" style="left:1801.80px;top:919.60px;width:116.70px;height:53.90px;background:#6ea8da;"></div>
<div class="t" style="left:1706.65px;top:937.48px;font-size:22.24px;line-height:22.24px;color:#737373;transform:scaleX(0.9487);-webkit-text-stroke:0.45px #737373;">Close</div>
<div class="t" style="left:1838.30px;top:937.48px;font-size:22.24px;line-height:22.24px;color:#f4f7fb;transform:scaleX(0.9534);-webkit-text-stroke:0.45px #f4f7fb;">Post</div>
<div class="r" style="left:900.00px;top:382.50px;width:395.00px;height:562.50px;background:#ffffff;border-radius:5.5px;box-shadow:0 2px 10px rgba(0,0,0,0.16), 0 0 0 1px rgba(0,0,0,0.10), 0 0 2px rgba(0,0,0,0.2);"></div>
<svg width="2304" height="1295" style="left:0;top:0"><path d="M927.28,407.41 A10.4,10.4 0 1 0 933.70,407.86" fill="none" stroke="#1f1f1f" stroke-width="1.6"/><path d="M922.68,407.01 L927.48,407.01 L927.48,411.81" fill="none" stroke="#1f1f1f" stroke-width="1.8" stroke-linejoin="miter"/><rect x="924.5" y="469.4" width="26.3" height="26.6" fill="#ffffff" stroke="#d4d4d4" stroke-width="2"/><rect x="959.7" y="468.4" width="28.3" height="28.6" fill="#ebebeb"/><rect x="961.5" y="470.2" width="24.7" height="25" fill="#000000"/><rect x="995.9" y="468.4" width="28.3" height="28.6" fill="#ebebeb"/><rect x="997.6999999999999" y="470.2" width="24.7" height="25" fill="#118dff"/><rect x="1032.1" y="468.4" width="28.3" height="28.6" fill="#ebebeb"/><rect x="1033.8999999999999" y="470.2" width="24.7" height="25" fill="#12239e"/><rect x="1068.3" y="468.4" width="28.3" height="28.6" fill="#ebebeb"/><rect x="1070.1" y="470.2" width="24.7" height="25" fill="#e66c37"/><rect x="1104.5" y="468.4" width="28.3" height="28.6" fill="#ebebeb"/><rect x="1106.3" y="470.2" width="24.7" height="25" fill="#1af21a"/><rect x="1140.7" y="468.4" width="28.3" height="28.6" fill="#ebebeb"/><rect x="1142.5" y="470.2" width="24.7" height="25" fill="#e044a7"/><rect x="1176.9" y="468.4" width="28.3" height="28.6" fill="#ebebeb"/><rect x="1178.7" y="470.2" width="24.7" height="25" fill="#744ec2"/><rect x="1213.1" y="468.4" width="28.3" height="28.6" fill="#ebebeb"/><rect x="1214.8999999999999" y="470.2" width="24.7" height="25" fill="#d9b300"/><rect x="1249.3" y="468.4" width="28.3" height="28.6" fill="#ebebeb"/><rect x="1251.1" y="470.2" width="24.7" height="25" fill="#c8171c"/><rect x="923.5" y="504.59999999999997" width="28.3" height="28.6" fill="#ebebeb"/><rect x="925.3" y="506.4" width="24.7" height="25" fill="#e6e6e6"/><rect x="959.7" y="504.59999999999997" width="28.3" height="28.6" fill="#ebebeb"/><rect x="961.5" y="506.4" width="24.7" height="25" fill="#999999"/><rect x="995.9" y="504.59999999999997" width="28.3" height="28.6" fill="#ebebeb"/><rect x="997.6999999999999" y="506.4" width="24.7" height="25" fill="#a0d1ff"/><rect x="1032.1" y="504.59999999999997" width="28.3" height="28.6" fill="#ebebeb"/><rect x="1033.8999999999999" y="506.4" width="24.7" height="25" fill="#a0a7d8"/><rect x="1068.3" y="504.59999999999997" width="28.3" height="28.6" fill="#ebebeb"/><rect x="1070.1" y="506.4" width="24.7" height="25" fill="#f5c4af"/><rect x="1104.5" y="504.59999999999997" width="28.3" height="28.6" fill="#ebebeb"/><rect x="1106.3" y="506.4" width="24.7" height="25" fill="#00f500"/><rect x="1140.7" y="504.59999999999997" width="28.3" height="28.6" fill="#ebebeb"/><rect x="1142.5" y="506.4" width="24.7" height="25" fill="#f3b4dc"/><rect x="1176.9" y="504.59999999999997" width="28.3" height="28.6" fill="#ebebeb"/><rect x="1178.7" y="506.4" width="24.7" height="25" fill="#c7b8e7"/><rect x="1213.1" y="504.59999999999997" width="28.3" height="28.6" fill="#ebebeb"/><rect x="1214.8999999999999" y="506.4" width="24.7" height="25" fill="#f0e199"/><rect x="1249.3" y="504.59999999999997" width="28.3" height="28.6" fill="#ebebeb"/><rect x="1251.1" y="506.4" width="24.7" height="25" fill="#f09595"/><rect x="923.5" y="540.8" width="28.3" height="28.6" fill="#ebebeb"/><rect x="925.3" y="542.5999999999999" width="24.7" height="25" fill="#cccccc"/><rect x="959.7" y="540.8" width="28.3" height="28.6" fill="#ebebeb"/><rect x="961.5" y="542.5999999999999" width="24.7" height="25" fill="#666666"/><rect x="995.9" y="540.8" width="28.3" height="28.6" fill="#ebebeb"/><rect x="997.6999999999999" y="542.5999999999999" width="24.7" height="25" fill="#70bbff"/><rect x="1032.1" y="540.8" width="28.3" height="28.6" fill="#ebebeb"/><rect x="1033.8999999999999" y="542.5999999999999" width="24.7" height="25" fill="#717bc5"/><rect x="1068.3" y="540.8" width="28.3" height="28.6" fill="#ebebeb"/><rect x="1070.1" y="542.5999999999999" width="24.7" height="25" fill="#f0a787"/><rect x="1104.5" y="540.8" width="28.3" height="28.6" fill="#ebebeb"/><rect x="1106.3" y="542.5999999999999" width="24.7" height="25" fill="#00e000"/><rect x="1140.7" y="540.8" width="28.3" height="28.6" fill="#ebebeb"/><rect x="1142.5" y="542.5999999999999" width="24.7" height="25" fill="#ec8dca"/><rect x="1176.9" y="540.8" width="28.3" height="28.6" fill="#ebebeb"/><rect x="1178.7" y="542.5999999999999" width="24.7" height="25" fill="#ac95da"/><rect x="1213.1" y="540.8" width="28.3" height="28.6" fill="#ebebeb"/><rect x="1214.8999999999999" y="542.5999999999999" width="24.7" height="25" fill="#e8d166"/><rect x="1249.3" y="540.8" width="28.3" height="28.6" fill="#ebebeb"/><rect x="1251.1" y="542.5999999999999" width="24.7" height="25" fill="#ea6262"/><rect x="923.5" y="577.0" width="28.3" height="28.6" fill="#ebebeb"/><rect x="925.3" y="578.8" width="24.7" height="25" fill="#b3b3b3"/><rect x="959.7" y="577.0" width="28.3" height="28.6" fill="#ebebeb"/><rect x="961.5" y="578.8" width="24.7" height="25" fill="#333333"/><rect x="995.9" y="577.0" width="28.3" height="28.6" fill="#ebebeb"/><rect x="997.6999999999999" y="578.8" width="24.7" height="25" fill="#41a4ff"/><rect x="1032.1" y="577.0" width="28.3" height="28.6" fill="#ebebeb"/><rect x="1033.8999999999999" y="578.8" width="24.7" height="25" fill="#4150b5"/><rect x="1068.3" y="577.0" width="28.3" height="28.6" fill="#ebebeb"/><rect x="1070.1" y="578.8" width="24.7" height="25" fill="#eb895f"/><rect x="1104.5" y="577.0" width="28.3" height="28.6" fill="#ebebeb"/><rect x="1106.3" y="578.8" width="24.7" height="25" fill="#00c800"/><rect x="1140.7" y="577.0" width="28.3" height="28.6" fill="#ebebeb"/><rect x="1142.5" y="578.8" width="24.7" height="25" fill="#e664b8"/><rect x="1176.9" y="577.0" width="28.3" height="28.6" fill="#ebebeb"/><rect x="1178.7" y="578.8" width="24.7" height="25" fill="#9071ce"/><rect x="1213.1" y="577.0" width="28.3" height="28.6" fill="#ebebeb"/><rect x="1214.8999999999999" y="578.8" width="24.7" height="25" fill="#e0c233"/><rect x="1249.3" y="577.0" width="28.3" height="28.6" fill="#ebebeb"/><rect x="1251.1" y="578.8" width="24.7" height="25" fill="#e73030"/><rect x="923.5" y="613.2" width="28.3" height="28.6" fill="#ebebeb"/><rect x="925.3" y="615.0" width="24.7" height="25" fill="#808080"/><rect x="959.7" y="613.2" width="28.3" height="28.6" fill="#ebebeb"/><rect x="961.5" y="615.0" width="24.7" height="25" fill="#1a1a1a"/><rect x="995.9" y="613.2" width="28.3" height="28.6" fill="#ebebeb"/><rect x="997.6999999999999" y="615.0" width="24.7" height="25" fill="#0d6abf"/><rect x="1032.1" y="613.2" width="28.3" height="28.6" fill="#ebebeb"/><rect x="1033.8999999999999" y="615.0" width="24.7" height="25" fill="#0e1a77"/><rect x="1068.3" y="613.2" width="28.3" height="28.6" fill="#ebebeb"/><rect x="1070.1" y="615.0" width="24.7" height="25" fill="#ad5129"/><rect x="1104.5" y="613.2" width="28.3" height="28.6" fill="#ebebeb"/><rect x="1106.3" y="615.0" width="24.7" height="25" fill="#00b000"/><rect x="1140.7" y="613.2" width="28.3" height="28.6" fill="#ebebeb"/><rect x="1142.5" y="615.0" width="24.7" height="25" fill="#a8347d"/><rect x="1176.9" y="613.2" width="28.3" height="28.6" fill="#ebebeb"/><rect x="1178.7" y="615.0" width="24.7" height="25" fill="#573b92"/><rect x="1213.1" y="613.2" width="28.3" height="28.6" fill="#ebebeb"/><rect x="1214.8999999999999" y="615.0" width="24.7" height="25" fill="#a38600"/><rect x="1249.3" y="613.2" width="28.3" height="28.6" fill="#ebebeb"/><rect x="1251.1" y="615.0" width="24.7" height="25" fill="#9c1010"/><rect x="923.5" y="649.4" width="28.3" height="28.6" fill="#ebebeb"/><rect x="925.3" y="651.1999999999999" width="24.7" height="25" fill="#666666"/><rect x="959.7" y="649.4" width="28.3" height="28.6" fill="#ebebeb"/><rect x="961.5" y="651.1999999999999" width="24.7" height="25" fill="#0d0d0d"/><rect x="995.9" y="649.4" width="28.3" height="28.6" fill="#ebebeb"/><rect x="997.6999999999999" y="651.1999999999999" width="24.7" height="25" fill="#094780"/><rect x="1032.1" y="649.4" width="28.3" height="28.6" fill="#ebebeb"/><rect x="1033.8999999999999" y="651.1999999999999" width="24.7" height="25" fill="#09114f"/><rect x="1068.3" y="649.4" width="28.3" height="28.6" fill="#ebebeb"/><rect x="1070.1" y="651.1999999999999" width="24.7" height="25" fill="#73361c"/><rect x="1104.5" y="649.4" width="28.3" height="28.6" fill="#ebebeb"/><rect x="1106.3" y="651.1999999999999" width="24.7" height="25" fill="#007d00"/><rect x="1140.7" y="649.4" width="28.3" height="28.6" fill="#ebebeb"/><rect x="1142.5" y="651.1999999999999" width="24.7" height="25" fill="#70234f"/><rect x="1176.9" y="649.4" width="28.3" height="28.6" fill="#ebebeb"/><rect x="1178.7" y="651.1999999999999" width="24.7" height="25" fill="#3a2761"/><rect x="1213.1" y="649.4" width="28.3" height="28.6" fill="#ebebeb"/><rect x="1214.8999999999999" y="651.1999999999999" width="24.7" height="25" fill="#6d5a00"/><rect x="1249.3" y="649.4" width="28.3" height="28.6" fill="#ebebeb"/><rect x="1251.1" y="651.1999999999999" width="24.7" height="25" fill="#6b0b0b"/><rect x="923.8" y="753" width="28" height="27.5" fill="#ebebeb"/><rect x="925.5999999999999" y="754.8" width="24.4" height="23.9" fill="#88b800"/><rect x="960.0" y="753" width="28" height="27.5" fill="#ebebeb"/><rect x="961.8" y="754.8" width="24.4" height="23.9" fill="#ff0000"/><rect x="997.2" y="754" width="26" height="25.5" fill="#fff" stroke="#d4d4d4" stroke-width="2"/><rect x="918.8" y="839.6" width="357.4" height="1.6" fill="#c8c6c4"/><path d="M1244.74,852.91 A10.6,10.6 0 1 0 1251.27,853.37" fill="none" stroke="#1f1f1f" stroke-width="1.6"/><path d="M1240.14,852.51 L1244.94,852.51 L1244.94,857.31" fill="none" stroke="#1f1f1f" stroke-width="1.8" stroke-linejoin="miter"/><rect x="932.5" y="896.7" width="25" height="25.4" fill="#fff" stroke="#e1dfdd" stroke-width="1.2"/><path d="M939,909.5 H951 M945,903.5 V915.5" stroke="#201f1e" stroke-width="1.9"/><path d="M986.5,905 V900.5 H1000 V914 H995.5" fill="none" stroke="#201f1e" stroke-width="1.9" stroke-linejoin="round"/><rect x="981" y="905" width="14.5" height="14.5" fill="none" stroke="#201f1e" stroke-width="1.9" rx="1"/></svg>
<div class="r" style="left:918.80px;top:798.50px;width:357.40px;height:32.20px;background:#f3f2f1;"></div>
<div class="t" style="left:948.60px;top:406.91px;font-size:25.15px;line-height:25.15px;color:#201f1e;transform:scaleX(0.9949);">Reset to default</div>
<div class="t" style="left:1020.21px;top:706.43px;font-size:24.42px;line-height:24.42px;color:#201f1e;transform:scaleX(0.9922);">Recent Colors</div>
<div class="t" style="left:1020.90px;top:803.73px;font-size:24.42px;line-height:24.42px;color:#201f1e;transform:scaleX(1.0250);">Custom Color</div>
<div class="t" style="left:981.06px;top:849.99px;font-size:25.29px;line-height:25.29px;color:#201f1e;font-weight:700;transform:scaleX(0.9352);">Frequent Colors</div>
<div class="r" style="left:1569.30px;top:723.90px;width:71.50px;height:55.10px;border:3px solid #db0d16;border-radius:6.5px;box-sizing:border-box;box-shadow:0 0 3px rgba(0,0,0,0.2), inset 0 0 4px rgba(0,0,0,0.12);"></div>
<div class="r" style="left:1621.30px;top:781.40px;width:83.00px;height:39.30px;border:3px solid #db0d16;border-radius:6.5px;box-sizing:border-box;box-shadow:0 0 3px rgba(0,0,0,0.2), inset 0 0 4px rgba(0,0,0,0.12);"></div>
</body></html>
